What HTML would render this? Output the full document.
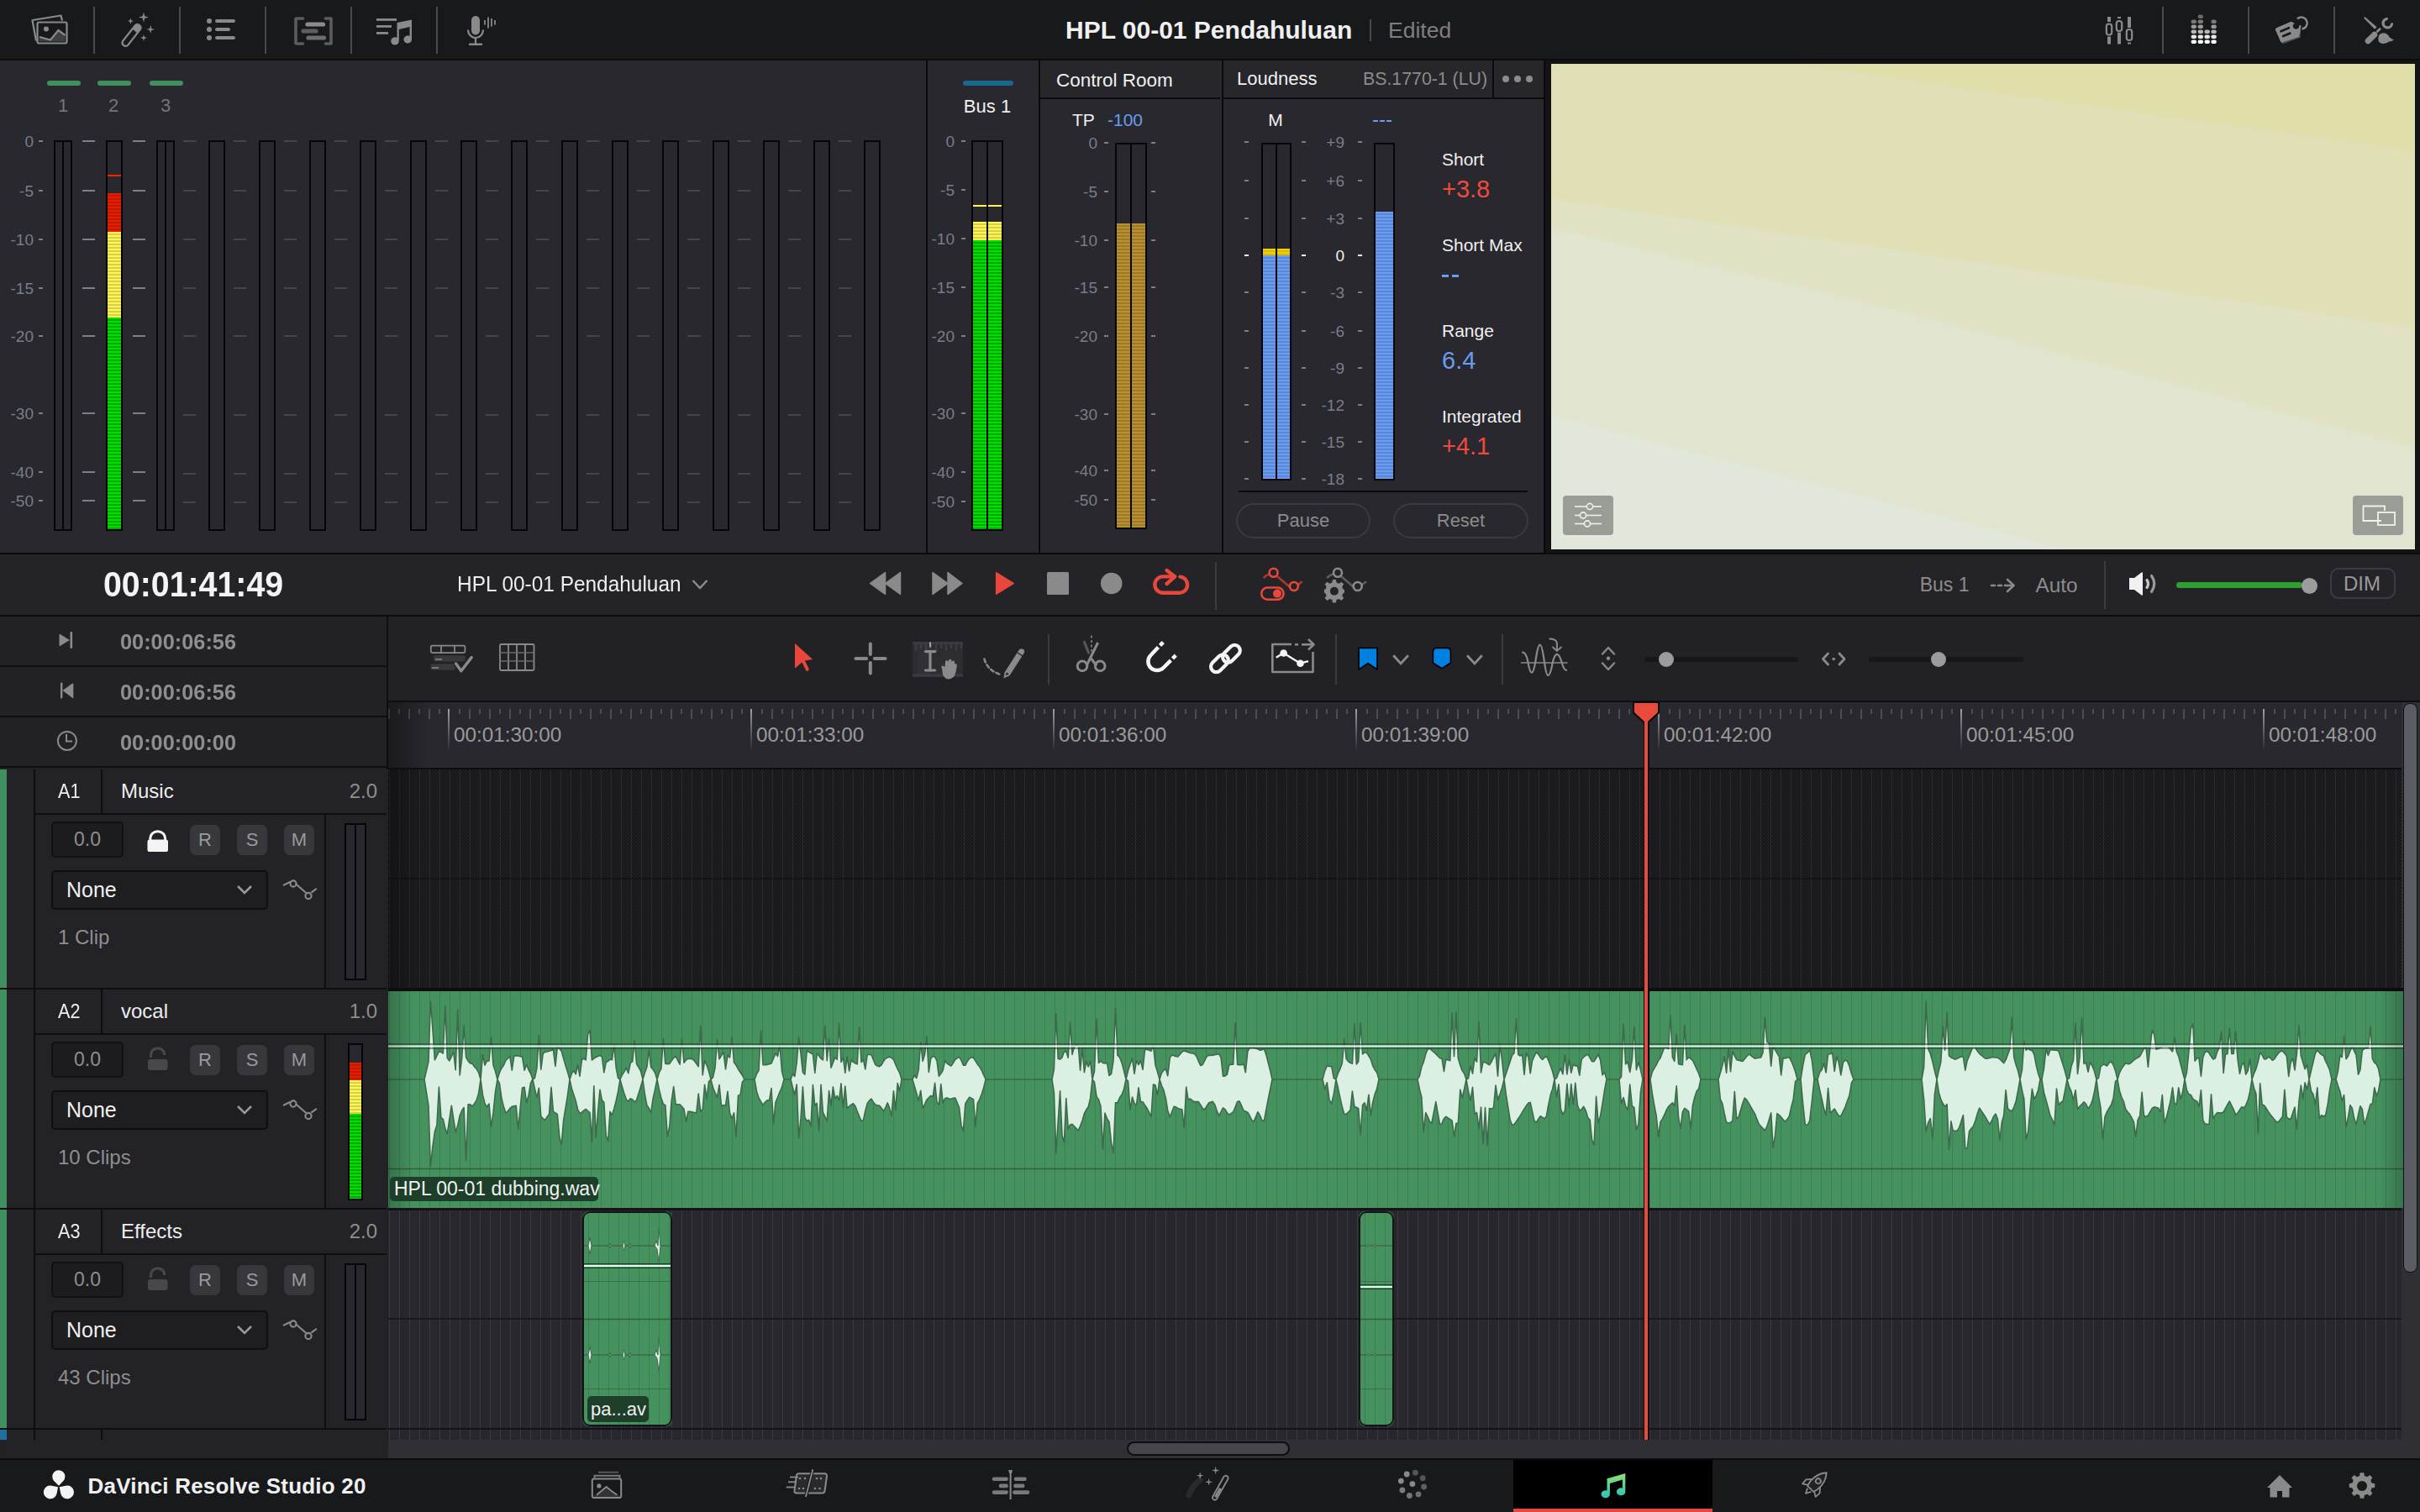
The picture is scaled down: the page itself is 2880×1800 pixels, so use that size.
<!DOCTYPE html><html><head><meta charset="utf-8"><style>
html,body{margin:0;padding:0;width:2880px;height:1800px;overflow:hidden;background:#222226;}
body{position:relative;font-family:"Liberation Sans",sans-serif;}
body>div{position:absolute;box-sizing:border-box;}
</style></head><body>
<div style="left:0px;top:0px;width:2880px;height:70px;background:#18191b"></div>
<div style="left:0px;top:70px;width:2880px;height:2px;background:#0b0b0c"></div>
<div style="left:111px;top:8px;width:2px;height:56px;background:#4a4a4d"></div>
<div style="left:213px;top:8px;width:2px;height:56px;background:#4a4a4d"></div>
<div style="left:315px;top:8px;width:2px;height:56px;background:#4a4a4d"></div>
<div style="left:417px;top:8px;width:2px;height:56px;background:#4a4a4d"></div>
<div style="left:519px;top:8px;width:2px;height:56px;background:#4a4a4d"></div>
<div style="left:2573px;top:8px;width:2px;height:56px;background:#4a4a4d"></div>
<div style="left:2675px;top:8px;width:2px;height:56px;background:#4a4a4d"></div>
<div style="left:2777px;top:8px;width:2px;height:56px;background:#4a4a4d"></div>
<div style="left:1268px;top:20.8px;font-size:30px;line-height:30px;color:#f0f0f0;font-weight:700;white-space:nowrap;">HPL 00-01 Pendahuluan</div>
<div style="left:1630px;top:23px;width:2px;height:26px;background:#4a4a4d"></div>
<div style="left:1652px;top:22.6px;font-size:26.5px;line-height:26.5px;color:#7e7e7e;font-weight:400;white-space:nowrap;">Edited</div>
<svg style="position:absolute;left:0px;top:0px;" width="600" height="70" viewBox="0 0 600 70">
<g fill="none" stroke="#8a8a8a" stroke-width="2.2" stroke-linejoin="round">
 <path d="M43 48.5 L38.5 24 L72.5 18.5 L74 24.5"/>
 <rect x="44.5" y="26.5" width="35" height="25" rx="2"/>
</g>
<path d="M46.5 44 L48.5 43.5 L60 47 L69.5 36 L77.5 41.5 L77.5 49.5 L46.5 49.5 Z" fill="#404042"/>
<path d="M47 44 L60 47.5 L69.5 36 L77.5 42" fill="none" stroke="#8a8a8a" stroke-width="2.2"/>
<circle cx="55" cy="34.6" r="3" fill="#8a8a8a"/>
<g>
 <path d="M146 49 L161 30 A4 4 0 0 1 167 35 L152 54 A4 4 0 0 1 146 49 Z" fill="none" stroke="#8a8a8a" stroke-width="2.2"/>
 <path d="M157.5 34.5 L161 30 A4 4 0 0 1 167 35 L163.5 39.5 Z" fill="#8a8a8a"/>
 <path d="M171 14.5 L172.3 19.2 L177 20.5 L172.3 21.8 L171 26.5 L169.7 21.8 L165 20.5 L169.7 19.2 Z" fill="#8a8a8a"/>
 <path d="M155.4 21.5 L156.3 24.2 L159 25.1 L156.3 26 L155.4 28.7 L154.5 26 L151.8 25.1 L154.5 24.2 Z" fill="#8a8a8a"/>
 <path d="M179.2 30 L180.3 33.9 L184.2 35 L180.3 36.1 L179.2 40 L178.1 36.1 L174.2 35 L178.1 33.9 Z" fill="#8a8a8a"/>
 <path d="M171 41 L171.9 44.1 L175 45 L171.9 45.9 L171 49 L170.1 45.9 L167 45 L170.1 44.1 Z" fill="#8a8a8a"/>
</g>
<g fill="#8a8a8a">
 <circle cx="249" cy="25" r="3"/><circle cx="249" cy="35" r="3"/><circle cx="249" cy="45" r="3"/>
</g>
<g stroke="#8a8a8a" stroke-width="4" stroke-linecap="round">
 <line x1="258" y1="25" x2="278" y2="25"/><line x1="258" y1="35" x2="272" y2="35"/><line x1="258" y1="45" x2="278" y2="45"/>
</g>
<g fill="none" stroke="#5c5c5e" stroke-width="3.6" stroke-linecap="round" stroke-linejoin="round">
 <path d="M360.5 22 L353 22 Q352 22 352 23 L352 51 Q352 52 353 52 L360.5 52"/>
 <path d="M387.5 22 L394 22 L394 52 L387.5 52"/>
</g>
<g stroke-linecap="round" stroke-width="5.2">
 <line x1="366" y1="29" x2="384.5" y2="29" stroke="#8c8c8c"/>
 <line x1="361" y1="37" x2="376" y2="37" stroke="#5e5e60"/>
 <line x1="367" y1="45" x2="385.5" y2="45" stroke="#6e6e70"/>
</g>
<g fill="#8a8a8a">
 <rect x="448" y="22" width="24" height="2.8"/><rect x="448" y="30" width="18" height="2.8"/><rect x="448" y="38" width="14" height="2.8"/>
 <path d="M472.5 27 L490 23.5 L490 47 A4.8 4.6 0 1 1 487.6 43 L487.6 32 L474.8 35 L474.8 49 A4.8 4.6 0 1 1 472.5 45 Z"/>
</g>
<g>
 <rect x="561" y="19" width="10" height="22.5" rx="5" fill="#8a8a8a"/>
 <path d="M557 35.5 A9 9.5 0 0 0 575 35.5" fill="none" stroke="#8a8a8a" stroke-width="2.2"/>
 <line x1="566" y1="45" x2="566" y2="52" stroke="#8a8a8a" stroke-width="2.2"/>
 <line x1="559" y1="52.8" x2="573" y2="52.8" stroke="#8a8a8a" stroke-width="2.4" stroke-linecap="round"/>
 <g stroke="#8a8a8a" stroke-width="1.8"><line x1="577" y1="24" x2="577" y2="29.5"/><line x1="581" y1="20.5" x2="581" y2="33.5"/><line x1="585" y1="22" x2="585" y2="31.5"/><line x1="589" y1="24" x2="589" y2="29.5"/></g>
</g>
</svg>
<svg style="position:absolute;left:2500px;top:0px;" width="380" height="70" viewBox="0 0 380 70">
<g fill="#8a8a8a">
 <rect x="8" y="20" width="4" height="6"/><rect x="8" y="43.5" width="4" height="9"/>
 <rect x="20" y="20" width="4" height="2"/><rect x="20" y="38.5" width="4" height="14"/>
 <rect x="32" y="20" width="4" height="13"/><rect x="32" y="50.5" width="4" height="2"/>
</g>
<g fill="none" stroke="#8a8a8a" stroke-width="2.2">
 <rect x="6.8" y="28.5" width="6.4" height="13" rx="3"/>
 <rect x="18.8" y="25" width="6.4" height="12" rx="3"/>
 <rect x="30.8" y="35" width="6.4" height="13" rx="3"/>
</g>
<rect x="107.60000000000018" y="23.6" width="6.4" height="4.4" rx="2" fill="#7a7a7a"/><rect x="107.60000000000018" y="29.6" width="6.4" height="4.4" rx="2" fill="#9a9a9a"/><rect x="107.60000000000018" y="35.599999999999994" width="6.4" height="4.4" rx="2" fill="#b8b8b8"/><rect x="107.60000000000018" y="41.599999999999994" width="6.4" height="4.4" rx="2" fill="#e8e8e8"/><rect x="107.60000000000018" y="47.599999999999994" width="6.4" height="4.4" rx="2" fill="#ffffff"/><rect x="115.60000000000018" y="17.6" width="6.4" height="4.4" rx="2" fill="#6a6a6a"/><rect x="115.60000000000018" y="23.6" width="6.4" height="4.4" rx="2" fill="#7a7a7a"/><rect x="115.60000000000018" y="29.6" width="6.4" height="4.4" rx="2" fill="#9a9a9a"/><rect x="115.60000000000018" y="35.599999999999994" width="6.4" height="4.4" rx="2" fill="#b8b8b8"/><rect x="115.60000000000018" y="41.599999999999994" width="6.4" height="4.4" rx="2" fill="#e8e8e8"/><rect x="115.60000000000018" y="47.599999999999994" width="6.4" height="4.4" rx="2" fill="#ffffff"/><rect x="123.49999999999982" y="35.599999999999994" width="6.4" height="4.4" rx="2" fill="#b8b8b8"/><rect x="123.49999999999982" y="41.599999999999994" width="6.4" height="4.4" rx="2" fill="#e8e8e8"/><rect x="123.49999999999982" y="47.599999999999994" width="6.4" height="4.4" rx="2" fill="#ffffff"/><rect x="131.39999999999992" y="23.6" width="6.4" height="4.4" rx="2" fill="#7a7a7a"/><rect x="131.39999999999992" y="29.6" width="6.4" height="4.4" rx="2" fill="#9a9a9a"/><rect x="131.39999999999992" y="35.599999999999994" width="6.4" height="4.4" rx="2" fill="#b8b8b8"/><rect x="131.39999999999992" y="41.599999999999994" width="6.4" height="4.4" rx="2" fill="#e8e8e8"/><rect x="131.39999999999992" y="47.599999999999994" width="6.4" height="4.4" rx="2" fill="#ffffff"/>
<path d="M207.9 35.5 Q207.5 34 209 33.3 L226.5 25.8 L231 27.8 A3.6 3.6 0 1 0 236 30.5 L238.5 29.7 L237 43.7 L216 50.7 Q214.8 51 214.3 50 Z" fill="#8a8a8a"/>
<path d="M216 52 L237 44 L236.5 41" fill="none" stroke="#5a5a5a" stroke-width="1.2"/>
<g stroke="#1a1a1d" stroke-width="2.8" stroke-linecap="round"><line x1="214.5" y1="37.2" x2="223.8" y2="33.2"/><line x1="217.2" y1="43" x2="225.3" y2="39.6"/></g>
<path d="M233.8 22.5 A7 7 0 1 1 239.5 34.5" fill="none" stroke="#8a8a8a" stroke-width="2.4"/>
<g fill="#8a8a8a">
 <path d="M313.3 21.8 Q313 20.3 314.8 20.2 L328.6 32.2 L326.2 34.8 Z"/>
 <line x1="329.2" y1="37.6" x2="332.2" y2="34.6" stroke="#8a8a8a" stroke-width="2.8" stroke-linecap="round"/>
 <line x1="318.2" y1="48.8" x2="325.8" y2="41.2" stroke="#8a8a8a" stroke-width="7" stroke-linecap="round"/>
 <path d="M341.8 20.8 A6.9 6.9 0 1 0 348.2 27.2 L345.2 27.6 A3.7 3.7 0 1 1 341.6 23.9 Z"/>
 <path d="M330.3 46.2 Q330.3 39.3 336.8 39.3 Q341.5 39.6 343.6 44.3 Q345.8 46.3 348.8 47.6 Q346.3 49.6 343.2 49.6 Q339.6 52.3 335.3 51.9 Q330.3 51.3 330.3 46.2 Z"/>
</g>
</svg>
<div style="left:0px;top:72px;width:2880px;height:586px;background:#28282e"></div>
<div style="left:0px;top:658px;width:2880px;height:2px;background:#0b0b0c"></div>
<div style="right:2840px;top:158.7px;font-size:19px;line-height:19px;color:#7a7d88;font-weight:400;white-space:nowrap;">0</div>
<div style="left:46px;top:167px;width:5px;height:2px;background:#7a7d88"></div>
<div style="right:2840px;top:217.7px;font-size:19px;line-height:19px;color:#7a7d88;font-weight:400;white-space:nowrap;">-5</div>
<div style="left:46px;top:226px;width:5px;height:2px;background:#7a7d88"></div>
<div style="right:2840px;top:275.7px;font-size:19px;line-height:19px;color:#7a7d88;font-weight:400;white-space:nowrap;">-10</div>
<div style="left:46px;top:284px;width:5px;height:2px;background:#7a7d88"></div>
<div style="right:2840px;top:333.7px;font-size:19px;line-height:19px;color:#7a7d88;font-weight:400;white-space:nowrap;">-15</div>
<div style="left:46px;top:342px;width:5px;height:2px;background:#7a7d88"></div>
<div style="right:2840px;top:390.7px;font-size:19px;line-height:19px;color:#7a7d88;font-weight:400;white-space:nowrap;">-20</div>
<div style="left:46px;top:399px;width:5px;height:2px;background:#7a7d88"></div>
<div style="right:2840px;top:482.7px;font-size:19px;line-height:19px;color:#7a7d88;font-weight:400;white-space:nowrap;">-30</div>
<div style="left:46px;top:491px;width:5px;height:2px;background:#7a7d88"></div>
<div style="right:2840px;top:552.7px;font-size:19px;line-height:19px;color:#7a7d88;font-weight:400;white-space:nowrap;">-40</div>
<div style="left:46px;top:561px;width:5px;height:2px;background:#7a7d88"></div>
<div style="right:2840px;top:586.7px;font-size:19px;line-height:19px;color:#7a7d88;font-weight:400;white-space:nowrap;">-50</div>
<div style="left:46px;top:595px;width:5px;height:2px;background:#7a7d88"></div>
<div style="left:64px;top:167px;width:22px;height:465px;border:2px solid #060608;background:#28282e"></div>
<div style="left:74px;top:167px;width:2px;height:465px;background:#060608"></div>
<div style="left:126px;top:167px;width:20px;height:465px;border:2px solid #060608;background:#28282e"></div>
<div style="left:128px;top:230px;width:16px;height:46px;background:repeating-linear-gradient(180deg,#e81c00 0px,#e81c00 2px,#be1a00 2px,#be1a00 4px)"></div>
<div style="left:128px;top:276px;width:16px;height:102px;background:repeating-linear-gradient(180deg,#fff654 0px,#fff654 2px,#d6cf4e 2px,#d6cf4e 4px)"></div>
<div style="left:128px;top:378px;width:16px;height:252px;background:repeating-linear-gradient(180deg,#00e000 0px,#00e000 2px,#00a800 2px,#00a800 4px)"></div>
<div style="left:128px;top:208px;width:16px;height:2px;background:#ff2000"></div>
<div style="left:186px;top:167px;width:22px;height:465px;border:2px solid #060608;background:#28282e"></div>
<div style="left:196px;top:167px;width:2px;height:465px;background:#060608"></div>
<div style="left:248px;top:167px;width:20px;height:465px;border:2px solid #060608;background:#28282e"></div>
<div style="left:308px;top:167px;width:20px;height:465px;border:2px solid #060608;background:#28282e"></div>
<div style="left:368px;top:167px;width:20px;height:465px;border:2px solid #060608;background:#28282e"></div>
<div style="left:428px;top:167px;width:20px;height:465px;border:2px solid #060608;background:#28282e"></div>
<div style="left:488px;top:167px;width:20px;height:465px;border:2px solid #060608;background:#28282e"></div>
<div style="left:548px;top:167px;width:20px;height:465px;border:2px solid #060608;background:#28282e"></div>
<div style="left:608px;top:167px;width:20px;height:465px;border:2px solid #060608;background:#28282e"></div>
<div style="left:668px;top:167px;width:20px;height:465px;border:2px solid #060608;background:#28282e"></div>
<div style="left:728px;top:167px;width:20px;height:465px;border:2px solid #060608;background:#28282e"></div>
<div style="left:788px;top:167px;width:20px;height:465px;border:2px solid #060608;background:#28282e"></div>
<div style="left:848px;top:167px;width:20px;height:465px;border:2px solid #060608;background:#28282e"></div>
<div style="left:908px;top:167px;width:20px;height:465px;border:2px solid #060608;background:#28282e"></div>
<div style="left:968px;top:167px;width:20px;height:465px;border:2px solid #060608;background:#28282e"></div>
<div style="left:1028px;top:167px;width:20px;height:465px;border:2px solid #060608;background:#28282e"></div>
<div style="left:98px;top:167px;width:15px;height:2px;background:#7d808c"></div>
<div style="left:98px;top:226px;width:15px;height:2px;background:#7d808c"></div>
<div style="left:98px;top:284px;width:15px;height:2px;background:#7d808c"></div>
<div style="left:98px;top:342px;width:15px;height:2px;background:#7d808c"></div>
<div style="left:98px;top:399px;width:15px;height:2px;background:#7d808c"></div>
<div style="left:98px;top:491px;width:15px;height:2px;background:#7d808c"></div>
<div style="left:98px;top:561px;width:15px;height:2px;background:#7d808c"></div>
<div style="left:98px;top:595px;width:15px;height:2px;background:#7d808c"></div>
<div style="left:158px;top:167px;width:15px;height:2px;background:#7d808c"></div>
<div style="left:158px;top:226px;width:15px;height:2px;background:#7d808c"></div>
<div style="left:158px;top:284px;width:15px;height:2px;background:#7d808c"></div>
<div style="left:158px;top:342px;width:15px;height:2px;background:#7d808c"></div>
<div style="left:158px;top:399px;width:15px;height:2px;background:#7d808c"></div>
<div style="left:158px;top:491px;width:15px;height:2px;background:#7d808c"></div>
<div style="left:158px;top:561px;width:15px;height:2px;background:#7d808c"></div>
<div style="left:158px;top:595px;width:15px;height:2px;background:#7d808c"></div>
<div style="left:218px;top:167px;width:15px;height:2px;background:#45464d"></div>
<div style="left:218px;top:226px;width:15px;height:2px;background:#45464d"></div>
<div style="left:218px;top:284px;width:15px;height:2px;background:#45464d"></div>
<div style="left:218px;top:342px;width:15px;height:2px;background:#45464d"></div>
<div style="left:218px;top:399px;width:15px;height:2px;background:#45464d"></div>
<div style="left:218px;top:493px;width:15px;height:2px;background:#45464d"></div>
<div style="left:218px;top:563px;width:15px;height:2px;background:#45464d"></div>
<div style="left:218px;top:597px;width:15px;height:2px;background:#45464d"></div>
<div style="left:278px;top:167px;width:15px;height:2px;background:#45464d"></div>
<div style="left:278px;top:226px;width:15px;height:2px;background:#45464d"></div>
<div style="left:278px;top:284px;width:15px;height:2px;background:#45464d"></div>
<div style="left:278px;top:342px;width:15px;height:2px;background:#45464d"></div>
<div style="left:278px;top:399px;width:15px;height:2px;background:#45464d"></div>
<div style="left:278px;top:493px;width:15px;height:2px;background:#45464d"></div>
<div style="left:278px;top:563px;width:15px;height:2px;background:#45464d"></div>
<div style="left:278px;top:597px;width:15px;height:2px;background:#45464d"></div>
<div style="left:338px;top:167px;width:15px;height:2px;background:#45464d"></div>
<div style="left:338px;top:226px;width:15px;height:2px;background:#45464d"></div>
<div style="left:338px;top:284px;width:15px;height:2px;background:#45464d"></div>
<div style="left:338px;top:342px;width:15px;height:2px;background:#45464d"></div>
<div style="left:338px;top:399px;width:15px;height:2px;background:#45464d"></div>
<div style="left:338px;top:493px;width:15px;height:2px;background:#45464d"></div>
<div style="left:338px;top:563px;width:15px;height:2px;background:#45464d"></div>
<div style="left:338px;top:597px;width:15px;height:2px;background:#45464d"></div>
<div style="left:398px;top:167px;width:15px;height:2px;background:#45464d"></div>
<div style="left:398px;top:226px;width:15px;height:2px;background:#45464d"></div>
<div style="left:398px;top:284px;width:15px;height:2px;background:#45464d"></div>
<div style="left:398px;top:342px;width:15px;height:2px;background:#45464d"></div>
<div style="left:398px;top:399px;width:15px;height:2px;background:#45464d"></div>
<div style="left:398px;top:493px;width:15px;height:2px;background:#45464d"></div>
<div style="left:398px;top:563px;width:15px;height:2px;background:#45464d"></div>
<div style="left:398px;top:597px;width:15px;height:2px;background:#45464d"></div>
<div style="left:458px;top:167px;width:15px;height:2px;background:#45464d"></div>
<div style="left:458px;top:226px;width:15px;height:2px;background:#45464d"></div>
<div style="left:458px;top:284px;width:15px;height:2px;background:#45464d"></div>
<div style="left:458px;top:342px;width:15px;height:2px;background:#45464d"></div>
<div style="left:458px;top:399px;width:15px;height:2px;background:#45464d"></div>
<div style="left:458px;top:493px;width:15px;height:2px;background:#45464d"></div>
<div style="left:458px;top:563px;width:15px;height:2px;background:#45464d"></div>
<div style="left:458px;top:597px;width:15px;height:2px;background:#45464d"></div>
<div style="left:518px;top:167px;width:15px;height:2px;background:#45464d"></div>
<div style="left:518px;top:226px;width:15px;height:2px;background:#45464d"></div>
<div style="left:518px;top:284px;width:15px;height:2px;background:#45464d"></div>
<div style="left:518px;top:342px;width:15px;height:2px;background:#45464d"></div>
<div style="left:518px;top:399px;width:15px;height:2px;background:#45464d"></div>
<div style="left:518px;top:493px;width:15px;height:2px;background:#45464d"></div>
<div style="left:518px;top:563px;width:15px;height:2px;background:#45464d"></div>
<div style="left:518px;top:597px;width:15px;height:2px;background:#45464d"></div>
<div style="left:578px;top:167px;width:15px;height:2px;background:#45464d"></div>
<div style="left:578px;top:226px;width:15px;height:2px;background:#45464d"></div>
<div style="left:578px;top:284px;width:15px;height:2px;background:#45464d"></div>
<div style="left:578px;top:342px;width:15px;height:2px;background:#45464d"></div>
<div style="left:578px;top:399px;width:15px;height:2px;background:#45464d"></div>
<div style="left:578px;top:493px;width:15px;height:2px;background:#45464d"></div>
<div style="left:578px;top:563px;width:15px;height:2px;background:#45464d"></div>
<div style="left:578px;top:597px;width:15px;height:2px;background:#45464d"></div>
<div style="left:638px;top:167px;width:15px;height:2px;background:#45464d"></div>
<div style="left:638px;top:226px;width:15px;height:2px;background:#45464d"></div>
<div style="left:638px;top:284px;width:15px;height:2px;background:#45464d"></div>
<div style="left:638px;top:342px;width:15px;height:2px;background:#45464d"></div>
<div style="left:638px;top:399px;width:15px;height:2px;background:#45464d"></div>
<div style="left:638px;top:493px;width:15px;height:2px;background:#45464d"></div>
<div style="left:638px;top:563px;width:15px;height:2px;background:#45464d"></div>
<div style="left:638px;top:597px;width:15px;height:2px;background:#45464d"></div>
<div style="left:698px;top:167px;width:15px;height:2px;background:#45464d"></div>
<div style="left:698px;top:226px;width:15px;height:2px;background:#45464d"></div>
<div style="left:698px;top:284px;width:15px;height:2px;background:#45464d"></div>
<div style="left:698px;top:342px;width:15px;height:2px;background:#45464d"></div>
<div style="left:698px;top:399px;width:15px;height:2px;background:#45464d"></div>
<div style="left:698px;top:493px;width:15px;height:2px;background:#45464d"></div>
<div style="left:698px;top:563px;width:15px;height:2px;background:#45464d"></div>
<div style="left:698px;top:597px;width:15px;height:2px;background:#45464d"></div>
<div style="left:758px;top:167px;width:15px;height:2px;background:#45464d"></div>
<div style="left:758px;top:226px;width:15px;height:2px;background:#45464d"></div>
<div style="left:758px;top:284px;width:15px;height:2px;background:#45464d"></div>
<div style="left:758px;top:342px;width:15px;height:2px;background:#45464d"></div>
<div style="left:758px;top:399px;width:15px;height:2px;background:#45464d"></div>
<div style="left:758px;top:493px;width:15px;height:2px;background:#45464d"></div>
<div style="left:758px;top:563px;width:15px;height:2px;background:#45464d"></div>
<div style="left:758px;top:597px;width:15px;height:2px;background:#45464d"></div>
<div style="left:818px;top:167px;width:15px;height:2px;background:#45464d"></div>
<div style="left:818px;top:226px;width:15px;height:2px;background:#45464d"></div>
<div style="left:818px;top:284px;width:15px;height:2px;background:#45464d"></div>
<div style="left:818px;top:342px;width:15px;height:2px;background:#45464d"></div>
<div style="left:818px;top:399px;width:15px;height:2px;background:#45464d"></div>
<div style="left:818px;top:493px;width:15px;height:2px;background:#45464d"></div>
<div style="left:818px;top:563px;width:15px;height:2px;background:#45464d"></div>
<div style="left:818px;top:597px;width:15px;height:2px;background:#45464d"></div>
<div style="left:878px;top:167px;width:15px;height:2px;background:#45464d"></div>
<div style="left:878px;top:226px;width:15px;height:2px;background:#45464d"></div>
<div style="left:878px;top:284px;width:15px;height:2px;background:#45464d"></div>
<div style="left:878px;top:342px;width:15px;height:2px;background:#45464d"></div>
<div style="left:878px;top:399px;width:15px;height:2px;background:#45464d"></div>
<div style="left:878px;top:493px;width:15px;height:2px;background:#45464d"></div>
<div style="left:878px;top:563px;width:15px;height:2px;background:#45464d"></div>
<div style="left:878px;top:597px;width:15px;height:2px;background:#45464d"></div>
<div style="left:938px;top:167px;width:15px;height:2px;background:#45464d"></div>
<div style="left:938px;top:226px;width:15px;height:2px;background:#45464d"></div>
<div style="left:938px;top:284px;width:15px;height:2px;background:#45464d"></div>
<div style="left:938px;top:342px;width:15px;height:2px;background:#45464d"></div>
<div style="left:938px;top:399px;width:15px;height:2px;background:#45464d"></div>
<div style="left:938px;top:493px;width:15px;height:2px;background:#45464d"></div>
<div style="left:938px;top:563px;width:15px;height:2px;background:#45464d"></div>
<div style="left:938px;top:597px;width:15px;height:2px;background:#45464d"></div>
<div style="left:998px;top:167px;width:15px;height:2px;background:#45464d"></div>
<div style="left:998px;top:226px;width:15px;height:2px;background:#45464d"></div>
<div style="left:998px;top:284px;width:15px;height:2px;background:#45464d"></div>
<div style="left:998px;top:342px;width:15px;height:2px;background:#45464d"></div>
<div style="left:998px;top:399px;width:15px;height:2px;background:#45464d"></div>
<div style="left:998px;top:493px;width:15px;height:2px;background:#45464d"></div>
<div style="left:998px;top:563px;width:15px;height:2px;background:#45464d"></div>
<div style="left:998px;top:597px;width:15px;height:2px;background:#45464d"></div>
<div style="left:56px;top:96px;width:40px;height:6px;border-radius:3px;background:#3f8f5f"></div>
<div style="left:-425px;width:1000px;text-align:center;top:115.3px;font-size:22px;line-height:22px;color:#72757b;font-weight:400;white-space:nowrap;">1</div>
<div style="left:116px;top:96px;width:40px;height:6px;border-radius:3px;background:#3f8f5f"></div>
<div style="left:-365px;width:1000px;text-align:center;top:115.3px;font-size:22px;line-height:22px;color:#72757b;font-weight:400;white-space:nowrap;">2</div>
<div style="left:178px;top:96px;width:40px;height:6px;border-radius:3px;background:#3f8f5f"></div>
<div style="left:-303px;width:1000px;text-align:center;top:115.3px;font-size:22px;line-height:22px;color:#72757b;font-weight:400;white-space:nowrap;">3</div>
<div style="left:1102px;top:72px;width:2px;height:586px;background:#0b0b0c"></div>
<div style="left:1236px;top:72px;width:2px;height:586px;background:#0b0b0c"></div>
<div style="left:1454px;top:72px;width:2px;height:586px;background:#0b0b0c"></div>
<div style="left:1837px;top:72px;width:2px;height:586px;background:#0b0b0c"></div>
<div style="left:1146px;top:96px;width:60px;height:6px;border-radius:3px;background:#1a6a8c"></div>
<div style="left:675px;width:1000px;text-align:center;top:115.8px;font-size:22px;line-height:22px;color:#f0f0f0;font-weight:400;white-space:nowrap;">Bus 1</div>
<div style="right:1744px;top:158.7px;font-size:19px;line-height:19px;color:#7a7d88;font-weight:400;white-space:nowrap;">0</div>
<div style="left:1144px;top:167px;width:5px;height:2px;background:#7a7d88"></div>
<div style="right:1744px;top:216.7px;font-size:19px;line-height:19px;color:#7a7d88;font-weight:400;white-space:nowrap;">-5</div>
<div style="left:1144px;top:225px;width:5px;height:2px;background:#7a7d88"></div>
<div style="right:1744px;top:274.7px;font-size:19px;line-height:19px;color:#7a7d88;font-weight:400;white-space:nowrap;">-10</div>
<div style="left:1144px;top:283px;width:5px;height:2px;background:#7a7d88"></div>
<div style="right:1744px;top:332.7px;font-size:19px;line-height:19px;color:#7a7d88;font-weight:400;white-space:nowrap;">-15</div>
<div style="left:1144px;top:341px;width:5px;height:2px;background:#7a7d88"></div>
<div style="right:1744px;top:390.7px;font-size:19px;line-height:19px;color:#7a7d88;font-weight:400;white-space:nowrap;">-20</div>
<div style="left:1144px;top:399px;width:5px;height:2px;background:#7a7d88"></div>
<div style="right:1744px;top:482.7px;font-size:19px;line-height:19px;color:#7a7d88;font-weight:400;white-space:nowrap;">-30</div>
<div style="left:1144px;top:491px;width:5px;height:2px;background:#7a7d88"></div>
<div style="right:1744px;top:552.7px;font-size:19px;line-height:19px;color:#7a7d88;font-weight:400;white-space:nowrap;">-40</div>
<div style="left:1144px;top:561px;width:5px;height:2px;background:#7a7d88"></div>
<div style="right:1744px;top:587.7px;font-size:19px;line-height:19px;color:#7a7d88;font-weight:400;white-space:nowrap;">-50</div>
<div style="left:1144px;top:596px;width:5px;height:2px;background:#7a7d88"></div>
<div style="left:1156px;top:167px;width:38px;height:465px;border:2px solid #060608;background:#28282e"></div>
<div style="left:1174px;top:167px;width:2px;height:465px;background:#060608"></div>
<div style="left:1158px;top:264px;width:16px;height:22px;background:repeating-linear-gradient(180deg,#fff654 0px,#fff654 2px,#d6cf4e 2px,#d6cf4e 4px)"></div>
<div style="left:1176px;top:264px;width:16px;height:22px;background:repeating-linear-gradient(180deg,#fff654 0px,#fff654 2px,#d6cf4e 2px,#d6cf4e 4px)"></div>
<div style="left:1158px;top:286px;width:16px;height:344px;background:repeating-linear-gradient(180deg,#00e000 0px,#00e000 2px,#00a800 2px,#00a800 4px)"></div>
<div style="left:1176px;top:286px;width:16px;height:344px;background:repeating-linear-gradient(180deg,#00e000 0px,#00e000 2px,#00a800 2px,#00a800 4px)"></div>
<div style="left:1158px;top:244px;width:16px;height:2px;background:#fff654"></div>
<div style="left:1176px;top:244px;width:16px;height:2px;background:#fff654"></div>
<div style="left:1238px;top:72px;width:214px;height:45px;background:#26262b"></div>
<div style="left:1238px;top:116px;width:214px;height:2px;background:#0b0b0c"></div>
<div style="left:1257px;top:85.0px;font-size:22.5px;line-height:22.5px;color:#f0f0f0;font-weight:400;white-space:nowrap;">Control Room</div>
<div style="left:1276px;top:132.2px;font-size:21px;line-height:21px;color:#f0f0f0;font-weight:400;white-space:nowrap;">TP</div>
<div style="left:1318px;top:132.2px;font-size:21px;line-height:21px;color:#6a9cf0;font-weight:400;white-space:nowrap;">-100</div>
<div style="right:1574px;top:160.7px;font-size:19px;line-height:19px;color:#7a7d88;font-weight:400;white-space:nowrap;">0</div>
<div style="left:1314px;top:169px;width:5px;height:2px;background:#7a7d88"></div>
<div style="left:1370px;top:169px;width:5px;height:2px;background:#7a7d88"></div>
<div style="right:1574px;top:218.7px;font-size:19px;line-height:19px;color:#7a7d88;font-weight:400;white-space:nowrap;">-5</div>
<div style="left:1314px;top:227px;width:5px;height:2px;background:#7a7d88"></div>
<div style="left:1370px;top:227px;width:5px;height:2px;background:#7a7d88"></div>
<div style="right:1574px;top:276.7px;font-size:19px;line-height:19px;color:#7a7d88;font-weight:400;white-space:nowrap;">-10</div>
<div style="left:1314px;top:285px;width:5px;height:2px;background:#7a7d88"></div>
<div style="left:1370px;top:285px;width:5px;height:2px;background:#7a7d88"></div>
<div style="right:1574px;top:332.7px;font-size:19px;line-height:19px;color:#7a7d88;font-weight:400;white-space:nowrap;">-15</div>
<div style="left:1314px;top:341px;width:5px;height:2px;background:#7a7d88"></div>
<div style="left:1370px;top:341px;width:5px;height:2px;background:#7a7d88"></div>
<div style="right:1574px;top:390.7px;font-size:19px;line-height:19px;color:#7a7d88;font-weight:400;white-space:nowrap;">-20</div>
<div style="left:1314px;top:399px;width:5px;height:2px;background:#7a7d88"></div>
<div style="left:1370px;top:399px;width:5px;height:2px;background:#7a7d88"></div>
<div style="right:1574px;top:483.7px;font-size:19px;line-height:19px;color:#7a7d88;font-weight:400;white-space:nowrap;">-30</div>
<div style="left:1314px;top:492px;width:5px;height:2px;background:#7a7d88"></div>
<div style="left:1370px;top:492px;width:5px;height:2px;background:#7a7d88"></div>
<div style="right:1574px;top:550.7px;font-size:19px;line-height:19px;color:#7a7d88;font-weight:400;white-space:nowrap;">-40</div>
<div style="left:1314px;top:559px;width:5px;height:2px;background:#7a7d88"></div>
<div style="left:1370px;top:559px;width:5px;height:2px;background:#7a7d88"></div>
<div style="right:1574px;top:585.7px;font-size:19px;line-height:19px;color:#7a7d88;font-weight:400;white-space:nowrap;">-50</div>
<div style="left:1314px;top:594px;width:5px;height:2px;background:#7a7d88"></div>
<div style="left:1370px;top:594px;width:5px;height:2px;background:#7a7d88"></div>
<div style="left:1327px;top:170px;width:38px;height:460px;border:2px solid #060608;background:#28282e"></div>
<div style="left:1345px;top:170px;width:2px;height:460px;background:#060608"></div>
<div style="left:1329px;top:266px;width:16px;height:362px;background:repeating-linear-gradient(180deg,#b89030 0px,#b89030 2px,#9c7a28 2px,#9c7a28 4px)"></div>
<div style="left:1347px;top:266px;width:16px;height:362px;background:repeating-linear-gradient(180deg,#b89030 0px,#b89030 2px,#9c7a28 2px,#9c7a28 4px)"></div>
<div style="left:1456px;top:72px;width:381px;height:45px;background:#26262b"></div>
<div style="left:1456px;top:116px;width:381px;height:2px;background:#0b0b0c"></div>
<div style="left:1776px;top:72px;width:2px;height:45px;background:#0b0b0c"></div>
<div style="left:1472px;top:83.3px;font-size:22px;line-height:22px;color:#f0f0f0;font-weight:400;white-space:nowrap;">Loudness</div>
<div style="right:1110px;top:83.6px;font-size:21.3px;line-height:21.3px;color:#8c8c8c;font-weight:400;white-space:nowrap;">BS.1770-1 (LU)</div>
<div style="left:1788px;top:90px;width:8px;height:8px;border-radius:50%;background:#8c8c8c"></div>
<div style="left:1802px;top:90px;width:8px;height:8px;border-radius:50%;background:#8c8c8c"></div>
<div style="left:1816px;top:90px;width:8px;height:8px;border-radius:50%;background:#8c8c8c"></div>
<div style="left:1018px;width:1000px;text-align:center;top:132.2px;font-size:21px;line-height:21px;color:#f0f0f0;font-weight:400;white-space:nowrap;">M</div>
<div style="left:1634px;top:143px;width:6px;height:2px;background:#6a9cf0"></div>
<div style="left:1642px;top:143px;width:6px;height:2px;background:#6a9cf0"></div>
<div style="left:1650px;top:143px;width:6px;height:2px;background:#6a9cf0"></div>
<div style="right:1280px;top:159.7px;font-size:19px;line-height:19px;color:#7a7d88;font-weight:400;white-space:nowrap;">+9</div>
<div style="left:1481px;top:168px;width:5px;height:2px;background:#7a7d88"></div>
<div style="left:1549px;top:168px;width:5px;height:2px;background:#7a7d88"></div>
<div style="left:1616px;top:168px;width:5px;height:2px;background:#7a7d88"></div>
<div style="right:1280px;top:205.7px;font-size:19px;line-height:19px;color:#7a7d88;font-weight:400;white-space:nowrap;">+6</div>
<div style="left:1481px;top:214px;width:5px;height:2px;background:#7a7d88"></div>
<div style="left:1549px;top:214px;width:5px;height:2px;background:#7a7d88"></div>
<div style="left:1616px;top:214px;width:5px;height:2px;background:#7a7d88"></div>
<div style="right:1280px;top:250.7px;font-size:19px;line-height:19px;color:#7a7d88;font-weight:400;white-space:nowrap;">+3</div>
<div style="left:1481px;top:259px;width:5px;height:2px;background:#7a7d88"></div>
<div style="left:1549px;top:259px;width:5px;height:2px;background:#7a7d88"></div>
<div style="left:1616px;top:259px;width:5px;height:2px;background:#7a7d88"></div>
<div style="right:1280px;top:294.7px;font-size:19px;line-height:19px;color:#f0f0f0;font-weight:400;white-space:nowrap;">0</div>
<div style="left:1481px;top:303px;width:5px;height:2px;background:#f0f0f0"></div>
<div style="left:1549px;top:303px;width:5px;height:2px;background:#f0f0f0"></div>
<div style="left:1616px;top:303px;width:5px;height:2px;background:#f0f0f0"></div>
<div style="right:1280px;top:338.7px;font-size:19px;line-height:19px;color:#7a7d88;font-weight:400;white-space:nowrap;">-3</div>
<div style="left:1481px;top:347px;width:5px;height:2px;background:#7a7d88"></div>
<div style="left:1549px;top:347px;width:5px;height:2px;background:#7a7d88"></div>
<div style="left:1616px;top:347px;width:5px;height:2px;background:#7a7d88"></div>
<div style="right:1280px;top:384.7px;font-size:19px;line-height:19px;color:#7a7d88;font-weight:400;white-space:nowrap;">-6</div>
<div style="left:1481px;top:393px;width:5px;height:2px;background:#7a7d88"></div>
<div style="left:1549px;top:393px;width:5px;height:2px;background:#7a7d88"></div>
<div style="left:1616px;top:393px;width:5px;height:2px;background:#7a7d88"></div>
<div style="right:1280px;top:428.7px;font-size:19px;line-height:19px;color:#7a7d88;font-weight:400;white-space:nowrap;">-9</div>
<div style="left:1481px;top:437px;width:5px;height:2px;background:#7a7d88"></div>
<div style="left:1549px;top:437px;width:5px;height:2px;background:#7a7d88"></div>
<div style="left:1616px;top:437px;width:5px;height:2px;background:#7a7d88"></div>
<div style="right:1280px;top:472.7px;font-size:19px;line-height:19px;color:#7a7d88;font-weight:400;white-space:nowrap;">-12</div>
<div style="left:1481px;top:481px;width:5px;height:2px;background:#7a7d88"></div>
<div style="left:1549px;top:481px;width:5px;height:2px;background:#7a7d88"></div>
<div style="left:1616px;top:481px;width:5px;height:2px;background:#7a7d88"></div>
<div style="right:1280px;top:516.7px;font-size:19px;line-height:19px;color:#7a7d88;font-weight:400;white-space:nowrap;">-15</div>
<div style="left:1481px;top:525px;width:5px;height:2px;background:#7a7d88"></div>
<div style="left:1549px;top:525px;width:5px;height:2px;background:#7a7d88"></div>
<div style="left:1616px;top:525px;width:5px;height:2px;background:#7a7d88"></div>
<div style="right:1280px;top:560.7px;font-size:19px;line-height:19px;color:#7a7d88;font-weight:400;white-space:nowrap;">-18</div>
<div style="left:1481px;top:569px;width:5px;height:2px;background:#7a7d88"></div>
<div style="left:1549px;top:569px;width:5px;height:2px;background:#7a7d88"></div>
<div style="left:1616px;top:569px;width:5px;height:2px;background:#7a7d88"></div>
<div style="left:1501px;top:170px;width:36px;height:402px;border:2px solid #060608;background:#28282e"></div>
<div style="left:1518px;top:170px;width:2px;height:402px;background:#060608"></div>
<div style="left:1503px;top:296px;width:15px;height:8px;background:repeating-linear-gradient(180deg,#f0d000 0px,#f0d000 2px,#d8bc00 2px,#d8bc00 4px)"></div>
<div style="left:1520px;top:296px;width:15px;height:8px;background:repeating-linear-gradient(180deg,#f0d000 0px,#f0d000 2px,#d8bc00 2px,#d8bc00 4px)"></div>
<div style="left:1503px;top:304px;width:15px;height:266px;background:repeating-linear-gradient(180deg,#6a9cf0 0px,#6a9cf0 2px,#5a86d8 2px,#5a86d8 4px)"></div>
<div style="left:1520px;top:304px;width:15px;height:266px;background:repeating-linear-gradient(180deg,#6a9cf0 0px,#6a9cf0 2px,#5a86d8 2px,#5a86d8 4px)"></div>
<div style="left:1635px;top:170px;width:25px;height:402px;border:2px solid #060608;background:#28282e"></div>
<div style="left:1637px;top:252px;width:21px;height:318px;background:repeating-linear-gradient(180deg,#6a9cf0 0px,#6a9cf0 2px,#5a86d8 2px,#5a86d8 4px)"></div>
<div style="left:1716px;top:178.7px;font-size:21px;line-height:21px;color:#f0f0f0;font-weight:400;white-space:nowrap;">Short</div>
<div style="left:1716px;top:211.3px;font-size:29px;line-height:29px;color:#f04a3c;font-weight:400;white-space:nowrap;">+3.8</div>
<div style="left:1716px;top:280.7px;font-size:21px;line-height:21px;color:#f0f0f0;font-weight:400;white-space:nowrap;">Short Max</div>
<div style="left:1716px;top:327px;width:8px;height:3px;background:#6a9cf0"></div>
<div style="left:1728px;top:327px;width:8px;height:3px;background:#6a9cf0"></div>
<div style="left:1716px;top:382.7px;font-size:21px;line-height:21px;color:#f0f0f0;font-weight:400;white-space:nowrap;">Range</div>
<div style="left:1716px;top:414.8px;font-size:29px;line-height:29px;color:#6a9cf0;font-weight:400;white-space:nowrap;">6.4</div>
<div style="left:1716px;top:484.7px;font-size:21px;line-height:21px;color:#f0f0f0;font-weight:400;white-space:nowrap;">Integrated</div>
<div style="left:1716px;top:516.8px;font-size:29px;line-height:29px;color:#f04a3c;font-weight:400;white-space:nowrap;">+4.1</div>
<div style="left:1474px;top:584px;width:344px;height:2px;background:#0b0b0c"></div>
<div style="left:1471px;top:599px;width:160px;height:42px;border:2px solid #3a3a40;border-radius:21px"></div>
<div style="left:1051px;width:1000px;text-align:center;top:609.3px;font-size:22px;line-height:22px;color:#8c8c8c;font-weight:400;white-space:nowrap;">Pause</div>
<div style="left:1658px;top:599px;width:161px;height:42px;border:2px solid #3a3a40;border-radius:21px"></div>
<div style="left:1238.5px;width:1000px;text-align:center;top:609.3px;font-size:22px;line-height:22px;color:#8c8c8c;font-weight:400;white-space:nowrap;">Reset</div>
<div style="left:1839px;top:72px;width:1041px;height:586px;background:#141416"></div>
<svg style="position:absolute;left:1846px;top:76px;" width="1028" height="578" viewBox="0 0 1028 578"><defs><filter id="vb" x="-5%" y="-5%" width="110%" height="110%"><feGaussianBlur stdDeviation="1.5"/></filter></defs>
<rect x="0" y="0" width="1028" height="578" fill="#e2e7dc"/>
<g filter="url(#vb)">
<polygon points="-10,-10 1040,-10 1040,590 658,590 -10,417" fill="#e1e5d0"/>
<polygon points="-10,-10 1040,-10 1040,461 425,297 -10,193" fill="#e0e2c3"/>
<polygon points="-10,-10 1040,-10 1040,316 -10,159" fill="#e0dfb5"/>
<polygon points="293,-10 1040,-10 1040,105 293,0" fill="#e0dea9"/>
</g></svg>
<div style="left:1860px;top:590px;width:60px;height:47px;border-radius:4px;background:#9a9c96"></div>
<div style="left:2800px;top:590px;width:60px;height:47px;border-radius:4px;background:#9a9c96"></div>
<svg style="position:absolute;left:1860px;top:590px;" width="60" height="47" viewBox="0 0 60 47"><g stroke="#f0f0f0" stroke-width="1.6" fill="none"><line x1="14" y1="13" x2="46" y2="13"/><line x1="14" y1="23.5" x2="46" y2="23.5"/><line x1="14" y1="33.5" x2="46" y2="33.5"/></g><g fill="#9a9c96" stroke="#f0f0f0" stroke-width="1.6"><circle cx="32" cy="13" r="3.6"/><circle cx="24" cy="23.5" r="3.6"/><circle cx="29" cy="33.5" r="3.6"/></g></svg>
<svg style="position:absolute;left:2800px;top:590px;" width="60" height="47" viewBox="0 0 60 47"><g stroke="#f0f0f0" stroke-width="1.8" fill="none"><path d="M34 30 L12.5 30 L12.5 12.5 L38 12.5 L38 18"/><rect x="30" y="20" width="20" height="15"/></g></svg>
<div style="left:0px;top:660px;width:2880px;height:72px;background:#232328"></div>
<div style="left:0px;top:732px;width:2880px;height:2px;background:#0b0b0c"></div>
<div style="left:0px;top:734px;width:2880px;height:1004px;background:#222226"></div>
<div style="left:123px;top:675.3px;font-size:41.6px;line-height:41.6px;color:#f4f4f4;font-weight:700;white-space:nowrap;transform:scaleX(0.945);transform-origin:0 50%;">00:01:41:49</div>
<div style="left:543.6px;top:682.8px;font-size:25px;line-height:25px;color:#eeeeee;font-weight:400;white-space:nowrap;transform:scaleX(0.977);transform-origin:0 50%;">HPL 00-01 Pendahuluan</div>
<svg style="position:absolute;left:822px;top:688px;" width="22" height="16" viewBox="0 0 22 16"><path d="M2.5 3 L11 12 L19.5 3" stroke="#8c8c8c" stroke-width="2.5" fill="none"/></svg>
<div style="left:1446px;top:669px;width:2px;height:57px;background:#3c3c40"></div>
<div style="right:536.5px;top:685.4px;font-size:23px;line-height:23px;color:#8c8c8c;font-weight:400;white-space:nowrap;">Bus 1</div>
<div style="left:2422.5px;top:684.7px;font-size:24.3px;line-height:24.3px;color:#8c8c8c;font-weight:400;white-space:nowrap;">Auto</div>
<div style="left:2504px;top:668px;width:2px;height:57px;background:#3c3c40"></div>
<div style="left:2590px;top:693px;width:150px;height:7px;border-radius:4px;background:#2fa02f"></div>
<div style="left:2739px;top:688px;width:19px;height:19px;border-radius:50%;background:#9c9c9c"></div>
<div style="left:2773px;top:676px;width:78px;height:37px;border:2px solid #3c3c42;border-radius:10px"></div>
<div style="left:2311px;width:1000px;text-align:center;top:683.3px;font-size:24px;line-height:24px;color:#9a9a9a;font-weight:400;white-space:nowrap;">DIM</div>
<svg style="position:absolute;left:1000px;top:660px;" width="700" height="72" viewBox="0 0 700 72">
<g fill="#8a8a8a" stroke="#8a8a8a" stroke-width="1.5" stroke-linejoin="round">
 <path d="M35.5 34.5 L53.5 21.5 L53.5 47.5 Z"/><path d="M53.5 34.5 L71.5 21.5 L71.5 47.5 Z"/>
 <path d="M110 21.5 L128 34.5 L110 47.5 Z"/><path d="M128 21.5 L145 34.5 L128 47.5 Z"/>
</g>
<path d="M185.5 21.5 L206.5 34.5 L185.5 47.5 Z" fill="#e8483c" stroke="#e8483c" stroke-width="1.2" stroke-linejoin="round"/>
<rect x="246" y="21" width="26" height="27" rx="1.5" fill="#8a8a8a"/>
<circle cx="322.7" cy="34.5" r="12.8" fill="#8a8a8a"/>
<g fill="none" stroke="#e8483c" stroke-width="4.4" stroke-linecap="round" stroke-linejoin="round">
 <path d="M398 26.4 L384 26.4 A9.6 9.6 0 0 0 384 45.7 L402.5 45.7 A9.6 9.6 0 0 0 404.5 26.6"/>
 <path d="M388.5 19 L398.2 26.4 L388.5 35"/>
</g>
<g fill="none" stroke-width="2.6">
 <path d="M503.5 28 Q507 24.5 510.8 23.5" stroke="#a8392f"/>
 <path d="M519.3 25.5 L535.8 39.5" stroke="#a8392f"/>
 <path d="M545 36 L549.7 32.2" stroke="#a8392f"/>
 <circle cx="515.6" cy="21.8" r="5" stroke="#e8483c"/>
 <circle cx="539.9" cy="38" r="5" stroke="#e8483c"/>
 <rect x="501.2" y="39.5" width="26.4" height="14.2" rx="7.1" stroke="#e8483c"/>
</g>
<circle cx="520" cy="46.6" r="5" fill="#e8483c"/>
<g fill="none" stroke-width="2.6">
 <path d="M579 28 Q582.5 24.5 586.5 23.5" stroke="#5c5c5e"/>
 <path d="M595.5 25.5 L611.5 39.5" stroke="#5c5c5e"/>
 <path d="M621 36 L626 32.2" stroke="#5c5c5e"/>
 <circle cx="592" cy="21.8" r="5" stroke="#8a8a8a"/>
 <circle cx="615.7" cy="38" r="5" stroke="#8a8a8a"/>
</g>
<g transform="translate(587.9,43.8)" fill="#8a8a8a">
 <path d="M-2 -12 L2 -12 L2.6 -8.6 L5.6 -7.4 L8.5 -9.4 L11.3 -6.6 L9.3 -3.7 L10.5 -0.7 L12 -0.3 L12 3.7 L10.5 4.1 L9.3 7.1 L11.3 10 L8.5 12.8 L5.6 10.8 L2.6 12 L2 15.4 L-2 15.4 L-2.6 12 L-5.6 10.8 L-8.5 12.8 L-11.3 10 L-9.3 7.1 L-10.5 4.1 L-12 3.7 L-12 -0.3 L-10.5 -0.7 L-9.3 -3.7 L-11.3 -6.6 L-8.5 -9.4 L-5.6 -7.4 L-2.6 -8.6 Z" transform="translate(0,-1.7)"/>
 <circle cx="0" cy="0" r="5" fill="#232328"/>
</g>
</svg>
<div style="left:1446px;top:669px;width:2px;height:57px;background:#3c3c40"></div>
<svg style="position:absolute;left:2365px;top:684px;" width="40" height="26" viewBox="0 0 40 26"><g fill="none" stroke="#8a8a8a" stroke-width="2.6" stroke-linecap="round" stroke-linejoin="round">
 <line x1="5" y1="13" x2="9" y2="13"/><line x1="13" y1="13" x2="17" y2="13"/><line x1="21" y1="13" x2="31" y2="13"/>
 <path d="M24 6 L31.5 13 L24 20"/></g></svg>
<svg style="position:absolute;left:2525px;top:675px;" width="50" height="40" viewBox="0 0 50 40"><path d="M9 13 L15 13 L23.5 6.5 Q25 5.8 25 7.5 L25 32.5 Q25 34.2 23.5 33.5 L15 27 L9 27 Z" fill="#f0f0f0"/>
<g fill="none" stroke-linecap="round"><path d="M30 15.5 Q33 20 30 24.5" stroke="#c8c8c8" stroke-width="3.2"/><path d="M35.5 10.5 Q42 20 35.5 29.5" stroke="#9a9a9a" stroke-width="3.2"/></g></svg>
<svg style="position:absolute;left:500px;top:750px;" width="1800" height="70" viewBox="0 0 1800 70">
<g fill="none" stroke="#8a8a8a" stroke-width="1.7">
 <rect x="12.8" y="18.6" width="40.6" height="8.6" rx="1.6"/>
 <line x1="25" y1="18.6" x2="25" y2="27.2"/><line x1="41" y1="18.6" x2="41" y2="27.2"/>
</g>
<rect x="16" y="30.2" width="37.7" height="7.4" rx="2" fill="#38383d"/>
<rect x="12.4" y="40.3" width="29.6" height="7.5" rx="2" fill="#38383d"/>
<line x1="18" y1="35" x2="26" y2="35" stroke="#8a8a8a" stroke-width="1.6"/>
<line x1="14" y1="45" x2="22" y2="45" stroke="#8a8a8a" stroke-width="1.6"/>
<path d="M42.6 40 L48.8 48.8 L61.2 32.6" fill="none" stroke="#222226" stroke-width="7"/>
<path d="M42.6 40 L48.8 48.8 L61.2 32.6" fill="none" stroke="#8a8a8a" stroke-width="3.4" stroke-linecap="round" stroke-linejoin="round"/>
<g fill="none" stroke="#8a8a8a" stroke-width="1.8">
 <rect x="95" y="17" width="40.5" height="31" rx="1.5"/>
 <line x1="105" y1="17" x2="105" y2="48"/><line x1="115" y1="17" x2="115" y2="48"/><line x1="125" y1="17" x2="125" y2="48"/>
</g>
<g stroke="#6a6a6c" stroke-width="1.4"><line x1="95" y1="27" x2="135.5" y2="27"/><line x1="95" y1="37" x2="135.5" y2="37"/></g>
<path d="M446 16 L467.2 35 L457.8 36.6 L462.6 46 Q463 47.5 461.6 48.6 Q460 49.5 459.2 48 L454.5 38.6 L446.5 45.2 Q446 45.5 446 44.5 Z" fill="#e8483c"/>
<g stroke="#8a8a8a" stroke-width="4" stroke-linecap="round">
 <line x1="535.8" y1="16.5" x2="535.8" y2="29"/><line x1="535.8" y1="39" x2="535.8" y2="51.5"/>
 <line x1="518.5" y1="34" x2="531" y2="34"/><line x1="540.8" y1="34" x2="553.5" y2="34"/>
</g>
<rect x="586" y="14" width="60" height="41.7" fill="#2c2c31"/>
<rect x="592" y="14" width="16" height="41.7" fill="#303036"/>
<rect x="586" y="14" width="60" height="3.3" fill="#3a3a40"/>
<rect x="586" y="52.4" width="60" height="3.3" fill="#3a3a40"/>
<g stroke="#4a4a50" stroke-width="1.2"><line x1="590" y1="17" x2="590" y2="25"/><line x1="596" y1="17" x2="596" y2="22"/><line x1="602" y1="17" x2="602" y2="25"/><line x1="608" y1="17" x2="608" y2="22"/><line x1="614" y1="17" x2="614" y2="25"/><line x1="620" y1="17" x2="620" y2="22"/><line x1="626" y1="17" x2="626" y2="25"/><line x1="632" y1="17" x2="632" y2="22"/><line x1="638" y1="17" x2="638" y2="25"/><line x1="644" y1="17" x2="644" y2="22"/></g>
<line x1="607" y1="14.5" x2="607" y2="20.5" stroke="#d0d0d0" stroke-width="1.4"/>
<g stroke="#8a8a8a" stroke-width="3.2" stroke-linecap="round"><line x1="607" y1="25.6" x2="607" y2="48"/><line x1="601.5" y1="25.6" x2="612.8" y2="25.6"/><line x1="601.5" y1="48" x2="612.8" y2="48"/></g>
<path d="M621 46 Q619.5 43.5 621.5 42.5 Q623 42.2 624.5 44 L625 38 Q625.2 36 627 36 Q628.8 36.3 628.5 38.5 L629 36.5 Q629.3 34.6 631 34.7 Q632.8 35 632.6 37.2 L632.8 38 Q633.2 36.3 634.8 36.5 Q636.4 37 636.2 39 L636 41 Q636.5 39.8 637.8 40.2 Q639.2 40.8 638.8 42.8 L637.5 50 Q636 57.5 629.5 58.5 Q624.5 58.8 622 53 Z" fill="#8a8a8a"/>
<g fill="none" stroke="#8a8a8a" stroke-width="2.6" stroke-linecap="round" stroke-dasharray="4 3.4">
 <path d="M671.5 34.6 Q675 48 690.7 53"/>
</g>
<path d="M695.5 50.6 L712.5 24 Q714.5 21 717.5 22.8 Q720.3 24.8 718.5 27.8 L701.5 54.3 L694.5 57.4 Z" fill="#8a8a8a"/>
<path d="M697.8 50.3 L700.8 52.4 L696.7 54.2 Z" fill="#222226"/>
<line x1="711" y1="27" x2="717" y2="31" stroke="#222226" stroke-width="1.4"/>
<line x1="799" y1="6.4" x2="799" y2="25.6" stroke="#8a8a8a" stroke-width="1.6" stroke-dasharray="3 2.5"/>
<line x1="790.5" y1="14.5" x2="795.5" y2="27" stroke="#55555a" stroke-width="3.2" stroke-linecap="round"/>
<g fill="none" stroke="#8a8a8a" stroke-width="3">
 <path d="M806.6 15 L796 36.5 L793.5 42"/>
 <path d="M798.5 34 L802 38.5 L805 42.5"/>
 <circle cx="788" cy="42.9" r="5.8"/><circle cx="809.2" cy="42.9" r="5.8"/>
</g>
<g fill="none" stroke="#f4f4f4" stroke-width="4.5">
 <path d="M878.4 20.5 L869.5 30 A10.6 10.6 0 0 0 884.5 45 L893.4 36.1"/>
 <line x1="880.5" y1="18.4" x2="884.3" y2="14.6"/><line x1="895.5" y1="34" x2="899.3" y2="30.2"/>
</g>
<g fill="none" stroke="#f4f4f4" stroke-width="4.2">
 <rect x="-12" y="-6.5" width="24" height="13" rx="6.5" transform="translate(965.4,28.2) rotate(-45)"/>
 <rect x="-12" y="-6.5" width="24" height="13" rx="6.5" transform="translate(951.4,39.7) rotate(-45)"/>
</g>
<g fill="none" stroke="#8a8a8a" stroke-width="2.6" stroke-linejoin="round">
 <path d="M1037 17 L1014.3 17 L1014.3 50 L1062.5 50 L1062.5 26"/>
 <path d="M1057 11 L1063.5 17.3 L1057 23.5"/>
</g>
<g stroke="#8a8a8a" stroke-width="2.6"><line x1="1041" y1="17.3" x2="1045" y2="17.3"/><line x1="1049" y1="17.3" x2="1063" y2="17.3"/></g>
<g stroke="#f4f4f4" stroke-width="2.4" fill="#f4f4f4">
 <line x1="1518.7" y1="32.7" x2="1527.6" y2="27.5" transform="translate(-500,0)"/>
 <line x1="1527.6" y1="27.5" x2="1547.5" y2="39.7" transform="translate(-500,0)"/>
 <line x1="1547.5" y1="39.7" x2="1557" y2="37.2" transform="translate(-500,0)"/>
 <circle cx="1027.6" cy="27.5" r="4.3" stroke="none"/><circle cx="1047.5" cy="39.7" r="4.3" stroke="none"/>
</g>
<path d="M1117.1 21.4 L1139 21.4 L1139 47 L1128 39.6 L1117.1 47 Z" fill="#0080e0" stroke="#000" stroke-width="1.6" stroke-linejoin="round"/>
<path d="M1158.3 30.2 L1167 40 L1175.9 30.2" fill="none" stroke="#8a8a8a" stroke-width="2.8"/>
<path d="M1205.4 26 Q1205.4 21.4 1210 21.4 L1221.8 21.4 Q1226.4 21.4 1226.4 26 L1226.4 39.3 L1215.9 45.7 L1205.4 39.3 Z" fill="#0080e0" stroke="#000" stroke-width="1.6" stroke-linejoin="round"/>
<path d="M1246 30.2 L1254.9 40 L1263.7 30.2" fill="none" stroke="#8a8a8a" stroke-width="2.8"/>
<line x1="1310" y1="39" x2="1365.5" y2="39" stroke="#8a8a8a" stroke-width="1.4"/>
<path d="M1312 26.7 Q1316 27 1318 36 Q1320.5 50.6 1322.7 50.6 Q1325.5 50.6 1328 33 Q1330.5 17.6 1332.5 17.6 Q1335 17.6 1337.5 35 Q1340 54 1342.3 54 Q1345 54 1347.5 40 Q1350 28.8 1352.9 28.8 Q1356 28.8 1359 40 Q1361.5 47.8 1364 47.8" fill="none" stroke="#8a8a8a" stroke-width="2.2" stroke-linecap="round"/>
<path d="M1344.4 10.5 Q1352.5 10.5 1352.9 16 L1352.9 24" fill="none" stroke="#8a8a8a" stroke-width="2" stroke-linecap="round"/>
<path d="M1348 20.5 L1352.9 25 L1357.8 20.5" fill="none" stroke="#8a8a8a" stroke-width="2" stroke-linecap="round"/>
<g fill="none" stroke="#8a8a8a" stroke-width="2.4" stroke-linecap="round" stroke-linejoin="round">
 <path d="M1407 28.5 L1414 21 L1421 28.5"/><path d="M1407 39.5 L1414 47 L1421 39.5"/>
</g>
<circle cx="1414" cy="33.7" r="2.2" fill="#8a8a8a"/>
<g fill="none" stroke="#8a8a8a" stroke-width="2.9" stroke-linecap="round" stroke-linejoin="round">
 <path d="M1675.5 28 L1669.5 34.5 L1675.5 41"/><path d="M1689 28 L1695 34.5 L1689 41"/>
</g>
<circle cx="1682.2" cy="34.5" r="1.8" fill="#8a8a8a"/>
</svg>
<div style="left:0px;top:792px;width:460px;height:2px;background:#0e0e10"></div>
<div style="left:0px;top:852px;width:460px;height:2px;background:#0e0e10"></div>
<div style="left:0px;top:912px;width:460px;height:2px;background:#0e0e10"></div>
<div style="left:460px;top:734px;width:2px;height:182px;background:#0e0e10"></div>
<svg style="position:absolute;left:60px;top:745px;" width="40" height="160" viewBox="0 0 40 160"><g fill="#8a8a8a">
<path d="M71.5 10 L83 17 L71.5 24 Q70.5 24.5 70.5 23.3 L70.5 10.7 Q70.5 9.5 71.5 10 Z" transform="translate(-60,0)"/>
<rect x="23.5" y="7" width="2.6" height="20" rx="1"/>
<rect x="12" y="67.6" width="2.4" height="19" rx="1"/>
<path d="M86.3 68.5 L74.5 77 L86.3 86 Q87.3 86.5 87.3 85.3 L87.3 69.7 Q87.3 68.5 86.3 68.5 Z" transform="translate(-60,0)"/>
</g>
<g fill="none" stroke="#8a8a8a" stroke-width="2"><circle cx="19.9" cy="136.9" r="11"/><path d="M19 129 L19 137.5 L26 137.5"/></g></svg>
<div style="left:143px;top:750.6px;font-size:26.5px;line-height:26.5px;color:#8e8e8e;font-weight:700;white-space:nowrap;transform:scaleX(0.956);transform-origin:0 50%;">00:00:06:56</div>
<div style="left:143px;top:810.6px;font-size:26.5px;line-height:26.5px;color:#8e8e8e;font-weight:700;white-space:nowrap;transform:scaleX(0.956);transform-origin:0 50%;">00:00:06:56</div>
<div style="left:143px;top:871.1px;font-size:26.5px;line-height:26.5px;color:#8e8e8e;font-weight:700;white-space:nowrap;transform:scaleX(0.956);transform-origin:0 50%;">00:00:00:00</div>
<div style="left:1247px;top:755px;width:2px;height:60px;background:#3c3c40"></div>
<div style="left:1589px;top:755px;width:2px;height:60px;background:#3c3c40"></div>
<div style="left:1787px;top:755px;width:2px;height:60px;background:#3c3c40"></div>
<div style="left:1957px;top:782px;width:183px;height:6px;border-radius:3px;background:#17171a"></div>
<div style="left:1974px;top:776px;width:18px;height:18px;border-radius:50%;background:#9c9c9c"></div>
<div style="left:2224px;top:782px;width:184px;height:6px;border-radius:3px;background:#17171a"></div>
<div style="left:2298px;top:776px;width:18px;height:18px;border-radius:50%;background:#9c9c9c"></div>
<div style="left:462px;top:834px;width:2418px;height:2px;background:#0e0e10"></div>
<div style="left:462px;top:836px;width:2398px;height:78px;background:#28282e"></div>
<svg style="position:absolute;left:462px;top:836px;" width="2398" height="78" viewBox="0 0 2398 78"><line x1="1" y1="8" x2="1" y2="20" stroke="#4a4d55" stroke-width="2"/><line x1="13" y1="8" x2="13" y2="14" stroke="#4a4d55" stroke-width="2"/><line x1="25" y1="8" x2="25" y2="20" stroke="#4a4d55" stroke-width="2"/><line x1="37" y1="8" x2="37" y2="14" stroke="#4a4d55" stroke-width="2"/><line x1="49" y1="8" x2="49" y2="20" stroke="#4a4d55" stroke-width="2"/><line x1="61" y1="8" x2="61" y2="14" stroke="#4a4d55" stroke-width="2"/><line x1="85" y1="8" x2="85" y2="14" stroke="#4a4d55" stroke-width="2"/><line x1="97" y1="8" x2="97" y2="20" stroke="#4a4d55" stroke-width="2"/><line x1="109" y1="8" x2="109" y2="14" stroke="#4a4d55" stroke-width="2"/><line x1="121" y1="8" x2="121" y2="20" stroke="#4a4d55" stroke-width="2"/><line x1="133" y1="8" x2="133" y2="14" stroke="#4a4d55" stroke-width="2"/><line x1="145" y1="8" x2="145" y2="20" stroke="#4a4d55" stroke-width="2"/><line x1="157" y1="8" x2="157" y2="14" stroke="#4a4d55" stroke-width="2"/><line x1="169" y1="8" x2="169" y2="20" stroke="#4a4d55" stroke-width="2"/><line x1="181" y1="8" x2="181" y2="14" stroke="#4a4d55" stroke-width="2"/><line x1="193" y1="8" x2="193" y2="20" stroke="#4a4d55" stroke-width="2"/><line x1="205" y1="8" x2="205" y2="14" stroke="#4a4d55" stroke-width="2"/><line x1="217" y1="8" x2="217" y2="20" stroke="#4a4d55" stroke-width="2"/><line x1="229" y1="8" x2="229" y2="14" stroke="#4a4d55" stroke-width="2"/><line x1="241" y1="8" x2="241" y2="20" stroke="#4a4d55" stroke-width="2"/><line x1="253" y1="8" x2="253" y2="14" stroke="#4a4d55" stroke-width="2"/><line x1="265" y1="8" x2="265" y2="20" stroke="#4a4d55" stroke-width="2"/><line x1="277" y1="8" x2="277" y2="14" stroke="#4a4d55" stroke-width="2"/><line x1="289" y1="8" x2="289" y2="20" stroke="#4a4d55" stroke-width="2"/><line x1="301" y1="8" x2="301" y2="14" stroke="#4a4d55" stroke-width="2"/><line x1="313" y1="8" x2="313" y2="20" stroke="#4a4d55" stroke-width="2"/><line x1="325" y1="8" x2="325" y2="14" stroke="#4a4d55" stroke-width="2"/><line x1="337" y1="8" x2="337" y2="20" stroke="#4a4d55" stroke-width="2"/><line x1="349" y1="8" x2="349" y2="14" stroke="#4a4d55" stroke-width="2"/><line x1="361" y1="8" x2="361" y2="20" stroke="#4a4d55" stroke-width="2"/><line x1="373" y1="8" x2="373" y2="14" stroke="#4a4d55" stroke-width="2"/><line x1="385" y1="8" x2="385" y2="20" stroke="#4a4d55" stroke-width="2"/><line x1="397" y1="8" x2="397" y2="14" stroke="#4a4d55" stroke-width="2"/><line x1="409" y1="8" x2="409" y2="20" stroke="#4a4d55" stroke-width="2"/><line x1="421" y1="8" x2="421" y2="14" stroke="#4a4d55" stroke-width="2"/><line x1="445" y1="8" x2="445" y2="14" stroke="#4a4d55" stroke-width="2"/><line x1="457" y1="8" x2="457" y2="20" stroke="#4a4d55" stroke-width="2"/><line x1="469" y1="8" x2="469" y2="14" stroke="#4a4d55" stroke-width="2"/><line x1="481" y1="8" x2="481" y2="20" stroke="#4a4d55" stroke-width="2"/><line x1="493" y1="8" x2="493" y2="14" stroke="#4a4d55" stroke-width="2"/><line x1="505" y1="8" x2="505" y2="20" stroke="#4a4d55" stroke-width="2"/><line x1="517" y1="8" x2="517" y2="14" stroke="#4a4d55" stroke-width="2"/><line x1="529" y1="8" x2="529" y2="20" stroke="#4a4d55" stroke-width="2"/><line x1="541" y1="8" x2="541" y2="14" stroke="#4a4d55" stroke-width="2"/><line x1="553" y1="8" x2="553" y2="20" stroke="#4a4d55" stroke-width="2"/><line x1="565" y1="8" x2="565" y2="14" stroke="#4a4d55" stroke-width="2"/><line x1="577" y1="8" x2="577" y2="20" stroke="#4a4d55" stroke-width="2"/><line x1="589" y1="8" x2="589" y2="14" stroke="#4a4d55" stroke-width="2"/><line x1="601" y1="8" x2="601" y2="20" stroke="#4a4d55" stroke-width="2"/><line x1="613" y1="8" x2="613" y2="14" stroke="#4a4d55" stroke-width="2"/><line x1="625" y1="8" x2="625" y2="20" stroke="#4a4d55" stroke-width="2"/><line x1="637" y1="8" x2="637" y2="14" stroke="#4a4d55" stroke-width="2"/><line x1="649" y1="8" x2="649" y2="20" stroke="#4a4d55" stroke-width="2"/><line x1="661" y1="8" x2="661" y2="14" stroke="#4a4d55" stroke-width="2"/><line x1="673" y1="8" x2="673" y2="20" stroke="#4a4d55" stroke-width="2"/><line x1="685" y1="8" x2="685" y2="14" stroke="#4a4d55" stroke-width="2"/><line x1="697" y1="8" x2="697" y2="20" stroke="#4a4d55" stroke-width="2"/><line x1="709" y1="8" x2="709" y2="14" stroke="#4a4d55" stroke-width="2"/><line x1="721" y1="8" x2="721" y2="20" stroke="#4a4d55" stroke-width="2"/><line x1="733" y1="8" x2="733" y2="14" stroke="#4a4d55" stroke-width="2"/><line x1="745" y1="8" x2="745" y2="20" stroke="#4a4d55" stroke-width="2"/><line x1="757" y1="8" x2="757" y2="14" stroke="#4a4d55" stroke-width="2"/><line x1="769" y1="8" x2="769" y2="20" stroke="#4a4d55" stroke-width="2"/><line x1="781" y1="8" x2="781" y2="14" stroke="#4a4d55" stroke-width="2"/><line x1="805" y1="8" x2="805" y2="14" stroke="#4a4d55" stroke-width="2"/><line x1="817" y1="8" x2="817" y2="20" stroke="#4a4d55" stroke-width="2"/><line x1="829" y1="8" x2="829" y2="14" stroke="#4a4d55" stroke-width="2"/><line x1="841" y1="8" x2="841" y2="20" stroke="#4a4d55" stroke-width="2"/><line x1="853" y1="8" x2="853" y2="14" stroke="#4a4d55" stroke-width="2"/><line x1="865" y1="8" x2="865" y2="20" stroke="#4a4d55" stroke-width="2"/><line x1="877" y1="8" x2="877" y2="14" stroke="#4a4d55" stroke-width="2"/><line x1="889" y1="8" x2="889" y2="20" stroke="#4a4d55" stroke-width="2"/><line x1="901" y1="8" x2="901" y2="14" stroke="#4a4d55" stroke-width="2"/><line x1="913" y1="8" x2="913" y2="20" stroke="#4a4d55" stroke-width="2"/><line x1="925" y1="8" x2="925" y2="14" stroke="#4a4d55" stroke-width="2"/><line x1="937" y1="8" x2="937" y2="20" stroke="#4a4d55" stroke-width="2"/><line x1="949" y1="8" x2="949" y2="14" stroke="#4a4d55" stroke-width="2"/><line x1="961" y1="8" x2="961" y2="20" stroke="#4a4d55" stroke-width="2"/><line x1="973" y1="8" x2="973" y2="14" stroke="#4a4d55" stroke-width="2"/><line x1="985" y1="8" x2="985" y2="20" stroke="#4a4d55" stroke-width="2"/><line x1="997" y1="8" x2="997" y2="14" stroke="#4a4d55" stroke-width="2"/><line x1="1009" y1="8" x2="1009" y2="20" stroke="#4a4d55" stroke-width="2"/><line x1="1021" y1="8" x2="1021" y2="14" stroke="#4a4d55" stroke-width="2"/><line x1="1033" y1="8" x2="1033" y2="20" stroke="#4a4d55" stroke-width="2"/><line x1="1045" y1="8" x2="1045" y2="14" stroke="#4a4d55" stroke-width="2"/><line x1="1057" y1="8" x2="1057" y2="20" stroke="#4a4d55" stroke-width="2"/><line x1="1069" y1="8" x2="1069" y2="14" stroke="#4a4d55" stroke-width="2"/><line x1="1081" y1="8" x2="1081" y2="20" stroke="#4a4d55" stroke-width="2"/><line x1="1093" y1="8" x2="1093" y2="14" stroke="#4a4d55" stroke-width="2"/><line x1="1105" y1="8" x2="1105" y2="20" stroke="#4a4d55" stroke-width="2"/><line x1="1117" y1="8" x2="1117" y2="14" stroke="#4a4d55" stroke-width="2"/><line x1="1129" y1="8" x2="1129" y2="20" stroke="#4a4d55" stroke-width="2"/><line x1="1141" y1="8" x2="1141" y2="14" stroke="#4a4d55" stroke-width="2"/><line x1="1165" y1="8" x2="1165" y2="14" stroke="#4a4d55" stroke-width="2"/><line x1="1177" y1="8" x2="1177" y2="20" stroke="#4a4d55" stroke-width="2"/><line x1="1189" y1="8" x2="1189" y2="14" stroke="#4a4d55" stroke-width="2"/><line x1="1201" y1="8" x2="1201" y2="20" stroke="#4a4d55" stroke-width="2"/><line x1="1213" y1="8" x2="1213" y2="14" stroke="#4a4d55" stroke-width="2"/><line x1="1225" y1="8" x2="1225" y2="20" stroke="#4a4d55" stroke-width="2"/><line x1="1237" y1="8" x2="1237" y2="14" stroke="#4a4d55" stroke-width="2"/><line x1="1249" y1="8" x2="1249" y2="20" stroke="#4a4d55" stroke-width="2"/><line x1="1261" y1="8" x2="1261" y2="14" stroke="#4a4d55" stroke-width="2"/><line x1="1273" y1="8" x2="1273" y2="20" stroke="#4a4d55" stroke-width="2"/><line x1="1285" y1="8" x2="1285" y2="14" stroke="#4a4d55" stroke-width="2"/><line x1="1297" y1="8" x2="1297" y2="20" stroke="#4a4d55" stroke-width="2"/><line x1="1309" y1="8" x2="1309" y2="14" stroke="#4a4d55" stroke-width="2"/><line x1="1321" y1="8" x2="1321" y2="20" stroke="#4a4d55" stroke-width="2"/><line x1="1333" y1="8" x2="1333" y2="14" stroke="#4a4d55" stroke-width="2"/><line x1="1345" y1="8" x2="1345" y2="20" stroke="#4a4d55" stroke-width="2"/><line x1="1357" y1="8" x2="1357" y2="14" stroke="#4a4d55" stroke-width="2"/><line x1="1369" y1="8" x2="1369" y2="20" stroke="#4a4d55" stroke-width="2"/><line x1="1381" y1="8" x2="1381" y2="14" stroke="#4a4d55" stroke-width="2"/><line x1="1393" y1="8" x2="1393" y2="20" stroke="#4a4d55" stroke-width="2"/><line x1="1405" y1="8" x2="1405" y2="14" stroke="#4a4d55" stroke-width="2"/><line x1="1417" y1="8" x2="1417" y2="20" stroke="#4a4d55" stroke-width="2"/><line x1="1429" y1="8" x2="1429" y2="14" stroke="#4a4d55" stroke-width="2"/><line x1="1441" y1="8" x2="1441" y2="20" stroke="#4a4d55" stroke-width="2"/><line x1="1453" y1="8" x2="1453" y2="14" stroke="#4a4d55" stroke-width="2"/><line x1="1465" y1="8" x2="1465" y2="20" stroke="#4a4d55" stroke-width="2"/><line x1="1477" y1="8" x2="1477" y2="14" stroke="#4a4d55" stroke-width="2"/><line x1="1489" y1="8" x2="1489" y2="20" stroke="#4a4d55" stroke-width="2"/><line x1="1501" y1="8" x2="1501" y2="14" stroke="#4a4d55" stroke-width="2"/><line x1="1525" y1="8" x2="1525" y2="14" stroke="#4a4d55" stroke-width="2"/><line x1="1537" y1="8" x2="1537" y2="20" stroke="#4a4d55" stroke-width="2"/><line x1="1549" y1="8" x2="1549" y2="14" stroke="#4a4d55" stroke-width="2"/><line x1="1561" y1="8" x2="1561" y2="20" stroke="#4a4d55" stroke-width="2"/><line x1="1573" y1="8" x2="1573" y2="14" stroke="#4a4d55" stroke-width="2"/><line x1="1585" y1="8" x2="1585" y2="20" stroke="#4a4d55" stroke-width="2"/><line x1="1597" y1="8" x2="1597" y2="14" stroke="#4a4d55" stroke-width="2"/><line x1="1609" y1="8" x2="1609" y2="20" stroke="#4a4d55" stroke-width="2"/><line x1="1621" y1="8" x2="1621" y2="14" stroke="#4a4d55" stroke-width="2"/><line x1="1633" y1="8" x2="1633" y2="20" stroke="#4a4d55" stroke-width="2"/><line x1="1645" y1="8" x2="1645" y2="14" stroke="#4a4d55" stroke-width="2"/><line x1="1657" y1="8" x2="1657" y2="20" stroke="#4a4d55" stroke-width="2"/><line x1="1669" y1="8" x2="1669" y2="14" stroke="#4a4d55" stroke-width="2"/><line x1="1681" y1="8" x2="1681" y2="20" stroke="#4a4d55" stroke-width="2"/><line x1="1693" y1="8" x2="1693" y2="14" stroke="#4a4d55" stroke-width="2"/><line x1="1705" y1="8" x2="1705" y2="20" stroke="#4a4d55" stroke-width="2"/><line x1="1717" y1="8" x2="1717" y2="14" stroke="#4a4d55" stroke-width="2"/><line x1="1729" y1="8" x2="1729" y2="20" stroke="#4a4d55" stroke-width="2"/><line x1="1741" y1="8" x2="1741" y2="14" stroke="#4a4d55" stroke-width="2"/><line x1="1753" y1="8" x2="1753" y2="20" stroke="#4a4d55" stroke-width="2"/><line x1="1765" y1="8" x2="1765" y2="14" stroke="#4a4d55" stroke-width="2"/><line x1="1777" y1="8" x2="1777" y2="20" stroke="#4a4d55" stroke-width="2"/><line x1="1789" y1="8" x2="1789" y2="14" stroke="#4a4d55" stroke-width="2"/><line x1="1801" y1="8" x2="1801" y2="20" stroke="#4a4d55" stroke-width="2"/><line x1="1813" y1="8" x2="1813" y2="14" stroke="#4a4d55" stroke-width="2"/><line x1="1825" y1="8" x2="1825" y2="20" stroke="#4a4d55" stroke-width="2"/><line x1="1837" y1="8" x2="1837" y2="14" stroke="#4a4d55" stroke-width="2"/><line x1="1849" y1="8" x2="1849" y2="20" stroke="#4a4d55" stroke-width="2"/><line x1="1861" y1="8" x2="1861" y2="14" stroke="#4a4d55" stroke-width="2"/><line x1="1885" y1="8" x2="1885" y2="14" stroke="#4a4d55" stroke-width="2"/><line x1="1897" y1="8" x2="1897" y2="20" stroke="#4a4d55" stroke-width="2"/><line x1="1909" y1="8" x2="1909" y2="14" stroke="#4a4d55" stroke-width="2"/><line x1="1921" y1="8" x2="1921" y2="20" stroke="#4a4d55" stroke-width="2"/><line x1="1933" y1="8" x2="1933" y2="14" stroke="#4a4d55" stroke-width="2"/><line x1="1945" y1="8" x2="1945" y2="20" stroke="#4a4d55" stroke-width="2"/><line x1="1957" y1="8" x2="1957" y2="14" stroke="#4a4d55" stroke-width="2"/><line x1="1969" y1="8" x2="1969" y2="20" stroke="#4a4d55" stroke-width="2"/><line x1="1981" y1="8" x2="1981" y2="14" stroke="#4a4d55" stroke-width="2"/><line x1="1993" y1="8" x2="1993" y2="20" stroke="#4a4d55" stroke-width="2"/><line x1="2005" y1="8" x2="2005" y2="14" stroke="#4a4d55" stroke-width="2"/><line x1="2017" y1="8" x2="2017" y2="20" stroke="#4a4d55" stroke-width="2"/><line x1="2029" y1="8" x2="2029" y2="14" stroke="#4a4d55" stroke-width="2"/><line x1="2041" y1="8" x2="2041" y2="20" stroke="#4a4d55" stroke-width="2"/><line x1="2053" y1="8" x2="2053" y2="14" stroke="#4a4d55" stroke-width="2"/><line x1="2065" y1="8" x2="2065" y2="20" stroke="#4a4d55" stroke-width="2"/><line x1="2077" y1="8" x2="2077" y2="14" stroke="#4a4d55" stroke-width="2"/><line x1="2089" y1="8" x2="2089" y2="20" stroke="#4a4d55" stroke-width="2"/><line x1="2101" y1="8" x2="2101" y2="14" stroke="#4a4d55" stroke-width="2"/><line x1="2113" y1="8" x2="2113" y2="20" stroke="#4a4d55" stroke-width="2"/><line x1="2125" y1="8" x2="2125" y2="14" stroke="#4a4d55" stroke-width="2"/><line x1="2137" y1="8" x2="2137" y2="20" stroke="#4a4d55" stroke-width="2"/><line x1="2149" y1="8" x2="2149" y2="14" stroke="#4a4d55" stroke-width="2"/><line x1="2161" y1="8" x2="2161" y2="20" stroke="#4a4d55" stroke-width="2"/><line x1="2173" y1="8" x2="2173" y2="14" stroke="#4a4d55" stroke-width="2"/><line x1="2185" y1="8" x2="2185" y2="20" stroke="#4a4d55" stroke-width="2"/><line x1="2197" y1="8" x2="2197" y2="14" stroke="#4a4d55" stroke-width="2"/><line x1="2209" y1="8" x2="2209" y2="20" stroke="#4a4d55" stroke-width="2"/><line x1="2221" y1="8" x2="2221" y2="14" stroke="#4a4d55" stroke-width="2"/><line x1="2245" y1="8" x2="2245" y2="14" stroke="#4a4d55" stroke-width="2"/><line x1="2257" y1="8" x2="2257" y2="20" stroke="#4a4d55" stroke-width="2"/><line x1="2269" y1="8" x2="2269" y2="14" stroke="#4a4d55" stroke-width="2"/><line x1="2281" y1="8" x2="2281" y2="20" stroke="#4a4d55" stroke-width="2"/><line x1="2293" y1="8" x2="2293" y2="14" stroke="#4a4d55" stroke-width="2"/><line x1="2305" y1="8" x2="2305" y2="20" stroke="#4a4d55" stroke-width="2"/><line x1="2317" y1="8" x2="2317" y2="14" stroke="#4a4d55" stroke-width="2"/><line x1="2329" y1="8" x2="2329" y2="20" stroke="#4a4d55" stroke-width="2"/><line x1="2341" y1="8" x2="2341" y2="14" stroke="#4a4d55" stroke-width="2"/><line x1="2353" y1="8" x2="2353" y2="20" stroke="#4a4d55" stroke-width="2"/><line x1="2365" y1="8" x2="2365" y2="14" stroke="#4a4d55" stroke-width="2"/><line x1="2377" y1="8" x2="2377" y2="20" stroke="#4a4d55" stroke-width="2"/><line x1="2389" y1="8" x2="2389" y2="14" stroke="#4a4d55" stroke-width="2"/></svg>
<div style="left:462px;top:836px;width:50px;height:78px;background:linear-gradient(90deg,rgba(0,0,0,0.35),rgba(0,0,0,0))"></div>
<div style="left:533px;top:844px;width:2px;height:50px;background:linear-gradient(180deg,#a0a0a0 0%,#707074 40%,rgba(80,80,85,0) 100%)"></div>
<div style="left:540.0px;top:863.1px;font-size:24.3px;line-height:24.3px;color:#9a9a9a;font-weight:400;white-space:nowrap;">00:01:30:00</div>
<div style="left:893px;top:844px;width:2px;height:50px;background:linear-gradient(180deg,#a0a0a0 0%,#707074 40%,rgba(80,80,85,0) 100%)"></div>
<div style="left:900.0px;top:863.1px;font-size:24.3px;line-height:24.3px;color:#9a9a9a;font-weight:400;white-space:nowrap;">00:01:33:00</div>
<div style="left:1253px;top:844px;width:2px;height:50px;background:linear-gradient(180deg,#a0a0a0 0%,#707074 40%,rgba(80,80,85,0) 100%)"></div>
<div style="left:1260.0px;top:863.1px;font-size:24.3px;line-height:24.3px;color:#9a9a9a;font-weight:400;white-space:nowrap;">00:01:36:00</div>
<div style="left:1613px;top:844px;width:2px;height:50px;background:linear-gradient(180deg,#a0a0a0 0%,#707074 40%,rgba(80,80,85,0) 100%)"></div>
<div style="left:1620.0px;top:863.1px;font-size:24.3px;line-height:24.3px;color:#9a9a9a;font-weight:400;white-space:nowrap;">00:01:39:00</div>
<div style="left:1973px;top:844px;width:2px;height:50px;background:linear-gradient(180deg,#a0a0a0 0%,#707074 40%,rgba(80,80,85,0) 100%)"></div>
<div style="left:1980.0px;top:863.1px;font-size:24.3px;line-height:24.3px;color:#9a9a9a;font-weight:400;white-space:nowrap;">00:01:42:00</div>
<div style="left:2333px;top:844px;width:2px;height:50px;background:linear-gradient(180deg,#a0a0a0 0%,#707074 40%,rgba(80,80,85,0) 100%)"></div>
<div style="left:2340.0px;top:863.1px;font-size:24.3px;line-height:24.3px;color:#9a9a9a;font-weight:400;white-space:nowrap;">00:01:45:00</div>
<div style="left:2693px;top:844px;width:2px;height:50px;background:linear-gradient(180deg,#a0a0a0 0%,#707074 40%,rgba(80,80,85,0) 100%)"></div>
<div style="left:2700.0px;top:863.1px;font-size:24.3px;line-height:24.3px;color:#9a9a9a;font-weight:400;white-space:nowrap;">00:01:48:00</div>
<div style="left:460px;top:914px;width:2420px;height:2px;background:#0e0e10"></div>
<div style="left:0px;top:916px;width:8px;height:260px;background:#3f8f5f"></div>
<div style="left:8px;top:916px;width:452px;height:260px;background:#222227"></div>
<div style="left:40px;top:916px;width:2px;height:260px;background:#0e0e10"></div>
<div style="left:120px;top:916px;width:2px;height:52px;background:#0e0e10"></div>
<div style="left:42px;top:968px;width:418px;height:2px;background:#0e0e10"></div>
<div style="left:386px;top:970px;width:2px;height:206px;background:#0e0e10"></div>
<div style="left:0px;top:1176px;width:460px;height:2px;background:#0e0e10"></div>
<div style="left:69px;top:929.8px;font-size:24px;line-height:24px;color:#eeeeee;font-weight:400;white-space:nowrap;transform:scaleX(0.9);transform-origin:0 50%;">A1</div>
<div style="left:144px;top:929.8px;font-size:24px;line-height:24px;color:#eeeeee;font-weight:400;white-space:nowrap;">Music</div>
<div style="right:2431px;top:929.8px;font-size:24px;line-height:24px;color:#8e8e8e;font-weight:400;white-space:nowrap;">2.0</div>
<div style="left:61px;top:978px;width:86px;height:43px;border:2px solid #111113;border-radius:5px;background:#1c1c1e"></div>
<div style="left:-396px;width:1000px;text-align:center;top:988.3px;font-size:23px;line-height:23px;color:#8e8e8e;font-weight:400;white-space:nowrap;">0.0</div>
<div style="left:226px;top:982px;width:36px;height:36px;border-radius:7px;background:#38383c"></div>
<div style="left:-256px;width:1000px;text-align:center;top:989.3px;font-size:22px;line-height:22px;color:#9a9a9a;font-weight:400;white-space:nowrap;">R</div>
<div style="left:282px;top:982px;width:36px;height:36px;border-radius:7px;background:#38383c"></div>
<div style="left:-200px;width:1000px;text-align:center;top:989.3px;font-size:22px;line-height:22px;color:#9a9a9a;font-weight:400;white-space:nowrap;">S</div>
<div style="left:338px;top:982px;width:36px;height:36px;border-radius:7px;background:#38383c"></div>
<div style="left:-144px;width:1000px;text-align:center;top:989.3px;font-size:22px;line-height:22px;color:#9a9a9a;font-weight:400;white-space:nowrap;">M</div>
<div style="left:61px;top:1036px;width:258px;height:47px;border:2px solid #0e0e10;border-radius:5px;background:#1e1e20"></div>
<div style="left:79px;top:1047.3px;font-size:25px;line-height:25px;color:#f0f0f0;font-weight:400;white-space:nowrap;">None</div>
<svg style="position:absolute;left:281px;top:1052px;" width="20" height="14" viewBox="0 0 20 14"><path d="M2 3 L10 11 L18 3" stroke="#9a9a9a" stroke-width="2.5" fill="none"/></svg>
<div style="left:69px;top:1104.3px;font-size:24px;line-height:24px;color:#8e8e8e;font-weight:400;white-space:nowrap;">1 Clip</div>
<svg style="position:absolute;left:170px;top:982px;" width="36" height="36" viewBox="0 0 36 36"><path d="M8.8 18 L8.8 16 A8.9 8.2 0 0 1 26.6 16 L26.6 18" fill="none" stroke="#f4f4f4" stroke-width="3"/><rect x="5.5" y="17.5" width="24.5" height="14.5" rx="2.6" fill="#f4f4f4"/></svg>
<svg style="position:absolute;left:332px;top:1044px;" width="50" height="30" viewBox="0 0 50 30"><g fill="none" stroke="#8a8a8a" stroke-width="2.1"><path d="M5 10 L13.5 5.8"/><circle cx="17" cy="8" r="3.6"/><path d="M19.7 8 L32.3 19"/><circle cx="35" cy="22.5" r="3.6"/><path d="M38.3 18.6 L44.8 13.8"/></g></svg>
<div style="left:410px;top:980px;width:26px;height:187px;border:2px solid #060608;background:#28282e"></div>
<div style="left:422px;top:980px;width:2px;height:187px;background:#060608"></div>
<div style="left:0px;top:1178px;width:8px;height:260px;background:#3f8f5f"></div>
<div style="left:8px;top:1178px;width:452px;height:260px;background:#222227"></div>
<div style="left:40px;top:1178px;width:2px;height:260px;background:#0e0e10"></div>
<div style="left:120px;top:1178px;width:2px;height:52px;background:#0e0e10"></div>
<div style="left:42px;top:1230px;width:418px;height:2px;background:#0e0e10"></div>
<div style="left:386px;top:1232px;width:2px;height:206px;background:#0e0e10"></div>
<div style="left:0px;top:1438px;width:460px;height:2px;background:#0e0e10"></div>
<div style="left:69px;top:1191.8px;font-size:24px;line-height:24px;color:#eeeeee;font-weight:400;white-space:nowrap;transform:scaleX(0.9);transform-origin:0 50%;">A2</div>
<div style="left:144px;top:1191.8px;font-size:24px;line-height:24px;color:#eeeeee;font-weight:400;white-space:nowrap;">vocal</div>
<div style="right:2431px;top:1191.8px;font-size:24px;line-height:24px;color:#8e8e8e;font-weight:400;white-space:nowrap;">1.0</div>
<div style="left:61px;top:1240px;width:86px;height:43px;border:2px solid #111113;border-radius:5px;background:#1c1c1e"></div>
<div style="left:-396px;width:1000px;text-align:center;top:1250.3px;font-size:23px;line-height:23px;color:#8e8e8e;font-weight:400;white-space:nowrap;">0.0</div>
<div style="left:226px;top:1244px;width:36px;height:36px;border-radius:7px;background:#38383c"></div>
<div style="left:-256px;width:1000px;text-align:center;top:1251.3px;font-size:22px;line-height:22px;color:#9a9a9a;font-weight:400;white-space:nowrap;">R</div>
<div style="left:282px;top:1244px;width:36px;height:36px;border-radius:7px;background:#38383c"></div>
<div style="left:-200px;width:1000px;text-align:center;top:1251.3px;font-size:22px;line-height:22px;color:#9a9a9a;font-weight:400;white-space:nowrap;">S</div>
<div style="left:338px;top:1244px;width:36px;height:36px;border-radius:7px;background:#38383c"></div>
<div style="left:-144px;width:1000px;text-align:center;top:1251.3px;font-size:22px;line-height:22px;color:#9a9a9a;font-weight:400;white-space:nowrap;">M</div>
<div style="left:61px;top:1298px;width:258px;height:47px;border:2px solid #0e0e10;border-radius:5px;background:#1e1e20"></div>
<div style="left:79px;top:1309.3px;font-size:25px;line-height:25px;color:#f0f0f0;font-weight:400;white-space:nowrap;">None</div>
<svg style="position:absolute;left:281px;top:1314px;" width="20" height="14" viewBox="0 0 20 14"><path d="M2 3 L10 11 L18 3" stroke="#9a9a9a" stroke-width="2.5" fill="none"/></svg>
<div style="left:69px;top:1366.3px;font-size:24px;line-height:24px;color:#8e8e8e;font-weight:400;white-space:nowrap;">10 Clips</div>
<svg style="position:absolute;left:170px;top:1244px;" width="36" height="34" viewBox="0 0 36 34"><path d="M9.5 15 L9.5 12 A8.2 8.2 0 0 1 25.9 12" fill="none" stroke="#48484c" stroke-width="3.2"/><rect x="6" y="17" width="23.5" height="13" rx="2.4" fill="#48484c"/></svg>
<svg style="position:absolute;left:332px;top:1306px;" width="50" height="30" viewBox="0 0 50 30"><g fill="none" stroke="#8a8a8a" stroke-width="2.1"><path d="M5 10 L13.5 5.8"/><circle cx="17" cy="8" r="3.6"/><path d="M19.7 8 L32.3 19"/><circle cx="35" cy="22.5" r="3.6"/><path d="M38.3 18.6 L44.8 13.8"/></g></svg>
<div style="left:414px;top:1242px;width:18px;height:187px;border:2px solid #060608;background:#28282e"></div>
<div style="left:416px;top:1265px;width:14px;height:21px;background:repeating-linear-gradient(180deg,#e81c00 0px,#e81c00 2px,#be1a00 2px,#be1a00 4px)"></div>
<div style="left:416px;top:1286px;width:14px;height:40px;background:repeating-linear-gradient(180deg,#fff654 0px,#fff654 2px,#d6cf4e 2px,#d6cf4e 4px)"></div>
<div style="left:416px;top:1326px;width:14px;height:101px;background:repeating-linear-gradient(180deg,#00e000 0px,#00e000 2px,#00a800 2px,#00a800 4px)"></div>
<div style="left:0px;top:1440px;width:8px;height:260px;background:#3f8f5f"></div>
<div style="left:8px;top:1440px;width:452px;height:260px;background:#222227"></div>
<div style="left:40px;top:1440px;width:2px;height:260px;background:#0e0e10"></div>
<div style="left:120px;top:1440px;width:2px;height:52px;background:#0e0e10"></div>
<div style="left:42px;top:1492px;width:418px;height:2px;background:#0e0e10"></div>
<div style="left:386px;top:1494px;width:2px;height:206px;background:#0e0e10"></div>
<div style="left:0px;top:1700px;width:460px;height:2px;background:#0e0e10"></div>
<div style="left:69px;top:1453.8px;font-size:24px;line-height:24px;color:#eeeeee;font-weight:400;white-space:nowrap;transform:scaleX(0.9);transform-origin:0 50%;">A3</div>
<div style="left:144px;top:1453.8px;font-size:24px;line-height:24px;color:#eeeeee;font-weight:400;white-space:nowrap;">Effects</div>
<div style="right:2431px;top:1453.8px;font-size:24px;line-height:24px;color:#8e8e8e;font-weight:400;white-space:nowrap;">2.0</div>
<div style="left:61px;top:1502px;width:86px;height:43px;border:2px solid #111113;border-radius:5px;background:#1c1c1e"></div>
<div style="left:-396px;width:1000px;text-align:center;top:1512.3px;font-size:23px;line-height:23px;color:#8e8e8e;font-weight:400;white-space:nowrap;">0.0</div>
<div style="left:226px;top:1506px;width:36px;height:36px;border-radius:7px;background:#38383c"></div>
<div style="left:-256px;width:1000px;text-align:center;top:1513.3px;font-size:22px;line-height:22px;color:#9a9a9a;font-weight:400;white-space:nowrap;">R</div>
<div style="left:282px;top:1506px;width:36px;height:36px;border-radius:7px;background:#38383c"></div>
<div style="left:-200px;width:1000px;text-align:center;top:1513.3px;font-size:22px;line-height:22px;color:#9a9a9a;font-weight:400;white-space:nowrap;">S</div>
<div style="left:338px;top:1506px;width:36px;height:36px;border-radius:7px;background:#38383c"></div>
<div style="left:-144px;width:1000px;text-align:center;top:1513.3px;font-size:22px;line-height:22px;color:#9a9a9a;font-weight:400;white-space:nowrap;">M</div>
<div style="left:61px;top:1560px;width:258px;height:47px;border:2px solid #0e0e10;border-radius:5px;background:#1e1e20"></div>
<div style="left:79px;top:1571.3px;font-size:25px;line-height:25px;color:#f0f0f0;font-weight:400;white-space:nowrap;">None</div>
<svg style="position:absolute;left:281px;top:1576px;" width="20" height="14" viewBox="0 0 20 14"><path d="M2 3 L10 11 L18 3" stroke="#9a9a9a" stroke-width="2.5" fill="none"/></svg>
<div style="left:69px;top:1628.3px;font-size:24px;line-height:24px;color:#8e8e8e;font-weight:400;white-space:nowrap;">43 Clips</div>
<svg style="position:absolute;left:170px;top:1506px;" width="36" height="34" viewBox="0 0 36 34"><path d="M9.5 15 L9.5 12 A8.2 8.2 0 0 1 25.9 12" fill="none" stroke="#48484c" stroke-width="3.2"/><rect x="6" y="17" width="23.5" height="13" rx="2.4" fill="#48484c"/></svg>
<svg style="position:absolute;left:332px;top:1568px;" width="50" height="30" viewBox="0 0 50 30"><g fill="none" stroke="#8a8a8a" stroke-width="2.1"><path d="M5 10 L13.5 5.8"/><circle cx="17" cy="8" r="3.6"/><path d="M19.7 8 L32.3 19"/><circle cx="35" cy="22.5" r="3.6"/><path d="M38.3 18.6 L44.8 13.8"/></g></svg>
<div style="left:410px;top:1504px;width:26px;height:187px;border:2px solid #060608;background:#28282e"></div>
<div style="left:422px;top:1504px;width:2px;height:187px;background:#060608"></div>
<div style="left:0px;top:1702px;width:8px;height:12px;background:#1f6f9f"></div>
<div style="left:8px;top:1702px;width:452px;height:34px;background:#222227"></div>
<div style="left:40px;top:1702px;width:2px;height:12px;background:#0e0e10"></div>
<div style="left:120px;top:1702px;width:2px;height:12px;background:#0e0e10"></div>
<div style="left:462px;top:916px;width:2398px;height:260px;background:repeating-linear-gradient(90deg,rgba(72,72,80,0.32) 0 1px,transparent 1px 12px) 1px 0/auto,repeating-conic-gradient(#151518 0 25%,#212125 0 50%) 0 0/4px 4px"></div>
<div style="left:462px;top:916px;width:40px;height:260px;background:linear-gradient(90deg,rgba(0,0,0,0.3),rgba(0,0,0,0))"></div>
<div style="left:462px;top:1045px;width:2398px;height:2px;background:rgba(10,10,12,0.45)"></div>
<div style="left:462px;top:1176px;width:2398px;height:2px;background:#0e0e10"></div>
<div style="left:462px;top:1178px;width:2398px;height:260px;background:#45925f"></div>
<div style="left:462px;top:1438px;width:2398px;height:3px;background:#141416"></div>
<div style="left:462px;top:1441px;width:2398px;height:261px;background-color:#28272e;background-image:repeating-linear-gradient(90deg,#3a3a40 0 1px,transparent 1px 12px);background-position:1px 0"></div>
<div style="left:462px;top:1702px;width:2398px;height:12px;background-color:#28272e;background-image:repeating-linear-gradient(90deg,#3a3a40 0 1px,transparent 1px 12px);background-position:1px 0"></div>
<div style="left:462px;top:1700px;width:2398px;height:2px;background:#141416"></div>
<div style="left:462px;top:1569px;width:2398px;height:2px;background:#19191c"></div>
<div style="left:462px;top:1714px;width:2418px;height:22px;background:#2f2f34"></div>
<div style="left:1341px;top:1716px;width:194px;height:17px;border:2px solid #0e0e10;border-radius:9px;background:#45454b"></div>
<div style="left:2858px;top:836px;width:22px;height:900px;background:#2f2f34"></div>
<div style="left:2860px;top:837px;width:17px;height:678px;border:1.5px solid #111113;border-radius:8px;background:#5a5d63"></div>
<svg style="position:absolute;left:462px;top:1178px;" width="2398" height="260" viewBox="0 0 2398 260">
<rect x="0" y="0" width="2398" height="260" fill="#45925f"/>
<g stroke="#3b7f53" stroke-width="1"><line x1="1.5" y1="0" x2="1.5" y2="260" /><line x1="13.5" y1="0" x2="13.5" y2="260" /><line x1="25.5" y1="0" x2="25.5" y2="260" /><line x1="37.5" y1="0" x2="37.5" y2="260" /><line x1="49.5" y1="0" x2="49.5" y2="260" /><line x1="61.5" y1="0" x2="61.5" y2="260" /><line x1="73.5" y1="0" x2="73.5" y2="260" /><line x1="85.5" y1="0" x2="85.5" y2="260" /><line x1="97.5" y1="0" x2="97.5" y2="260" /><line x1="109.5" y1="0" x2="109.5" y2="260" /><line x1="121.5" y1="0" x2="121.5" y2="260" /><line x1="133.5" y1="0" x2="133.5" y2="260" /><line x1="145.5" y1="0" x2="145.5" y2="260" /><line x1="157.5" y1="0" x2="157.5" y2="260" /><line x1="169.5" y1="0" x2="169.5" y2="260" /><line x1="181.5" y1="0" x2="181.5" y2="260" /><line x1="193.5" y1="0" x2="193.5" y2="260" /><line x1="205.5" y1="0" x2="205.5" y2="260" /><line x1="217.5" y1="0" x2="217.5" y2="260" /><line x1="229.5" y1="0" x2="229.5" y2="260" /><line x1="241.5" y1="0" x2="241.5" y2="260" /><line x1="253.5" y1="0" x2="253.5" y2="260" /><line x1="265.5" y1="0" x2="265.5" y2="260" /><line x1="277.5" y1="0" x2="277.5" y2="260" /><line x1="289.5" y1="0" x2="289.5" y2="260" /><line x1="301.5" y1="0" x2="301.5" y2="260" /><line x1="313.5" y1="0" x2="313.5" y2="260" /><line x1="325.5" y1="0" x2="325.5" y2="260" /><line x1="337.5" y1="0" x2="337.5" y2="260" /><line x1="349.5" y1="0" x2="349.5" y2="260" /><line x1="361.5" y1="0" x2="361.5" y2="260" /><line x1="373.5" y1="0" x2="373.5" y2="260" /><line x1="385.5" y1="0" x2="385.5" y2="260" /><line x1="397.5" y1="0" x2="397.5" y2="260" /><line x1="409.5" y1="0" x2="409.5" y2="260" /><line x1="421.5" y1="0" x2="421.5" y2="260" /><line x1="433.5" y1="0" x2="433.5" y2="260" /><line x1="445.5" y1="0" x2="445.5" y2="260" /><line x1="457.5" y1="0" x2="457.5" y2="260" /><line x1="469.5" y1="0" x2="469.5" y2="260" /><line x1="481.5" y1="0" x2="481.5" y2="260" /><line x1="493.5" y1="0" x2="493.5" y2="260" /><line x1="505.5" y1="0" x2="505.5" y2="260" /><line x1="517.5" y1="0" x2="517.5" y2="260" /><line x1="529.5" y1="0" x2="529.5" y2="260" /><line x1="541.5" y1="0" x2="541.5" y2="260" /><line x1="553.5" y1="0" x2="553.5" y2="260" /><line x1="565.5" y1="0" x2="565.5" y2="260" /><line x1="577.5" y1="0" x2="577.5" y2="260" /><line x1="589.5" y1="0" x2="589.5" y2="260" /><line x1="601.5" y1="0" x2="601.5" y2="260" /><line x1="613.5" y1="0" x2="613.5" y2="260" /><line x1="625.5" y1="0" x2="625.5" y2="260" /><line x1="637.5" y1="0" x2="637.5" y2="260" /><line x1="649.5" y1="0" x2="649.5" y2="260" /><line x1="661.5" y1="0" x2="661.5" y2="260" /><line x1="673.5" y1="0" x2="673.5" y2="260" /><line x1="685.5" y1="0" x2="685.5" y2="260" /><line x1="697.5" y1="0" x2="697.5" y2="260" /><line x1="709.5" y1="0" x2="709.5" y2="260" /><line x1="721.5" y1="0" x2="721.5" y2="260" /><line x1="733.5" y1="0" x2="733.5" y2="260" /><line x1="745.5" y1="0" x2="745.5" y2="260" /><line x1="757.5" y1="0" x2="757.5" y2="260" /><line x1="769.5" y1="0" x2="769.5" y2="260" /><line x1="781.5" y1="0" x2="781.5" y2="260" /><line x1="793.5" y1="0" x2="793.5" y2="260" /><line x1="805.5" y1="0" x2="805.5" y2="260" /><line x1="817.5" y1="0" x2="817.5" y2="260" /><line x1="829.5" y1="0" x2="829.5" y2="260" /><line x1="841.5" y1="0" x2="841.5" y2="260" /><line x1="853.5" y1="0" x2="853.5" y2="260" /><line x1="865.5" y1="0" x2="865.5" y2="260" /><line x1="877.5" y1="0" x2="877.5" y2="260" /><line x1="889.5" y1="0" x2="889.5" y2="260" /><line x1="901.5" y1="0" x2="901.5" y2="260" /><line x1="913.5" y1="0" x2="913.5" y2="260" /><line x1="925.5" y1="0" x2="925.5" y2="260" /><line x1="937.5" y1="0" x2="937.5" y2="260" /><line x1="949.5" y1="0" x2="949.5" y2="260" /><line x1="961.5" y1="0" x2="961.5" y2="260" /><line x1="973.5" y1="0" x2="973.5" y2="260" /><line x1="985.5" y1="0" x2="985.5" y2="260" /><line x1="997.5" y1="0" x2="997.5" y2="260" /><line x1="1009.5" y1="0" x2="1009.5" y2="260" /><line x1="1021.5" y1="0" x2="1021.5" y2="260" /><line x1="1033.5" y1="0" x2="1033.5" y2="260" /><line x1="1045.5" y1="0" x2="1045.5" y2="260" /><line x1="1057.5" y1="0" x2="1057.5" y2="260" /><line x1="1069.5" y1="0" x2="1069.5" y2="260" /><line x1="1081.5" y1="0" x2="1081.5" y2="260" /><line x1="1093.5" y1="0" x2="1093.5" y2="260" /><line x1="1105.5" y1="0" x2="1105.5" y2="260" /><line x1="1117.5" y1="0" x2="1117.5" y2="260" /><line x1="1129.5" y1="0" x2="1129.5" y2="260" /><line x1="1141.5" y1="0" x2="1141.5" y2="260" /><line x1="1153.5" y1="0" x2="1153.5" y2="260" /><line x1="1165.5" y1="0" x2="1165.5" y2="260" /><line x1="1177.5" y1="0" x2="1177.5" y2="260" /><line x1="1189.5" y1="0" x2="1189.5" y2="260" /><line x1="1201.5" y1="0" x2="1201.5" y2="260" /><line x1="1213.5" y1="0" x2="1213.5" y2="260" /><line x1="1225.5" y1="0" x2="1225.5" y2="260" /><line x1="1237.5" y1="0" x2="1237.5" y2="260" /><line x1="1249.5" y1="0" x2="1249.5" y2="260" /><line x1="1261.5" y1="0" x2="1261.5" y2="260" /><line x1="1273.5" y1="0" x2="1273.5" y2="260" /><line x1="1285.5" y1="0" x2="1285.5" y2="260" /><line x1="1297.5" y1="0" x2="1297.5" y2="260" /><line x1="1309.5" y1="0" x2="1309.5" y2="260" /><line x1="1321.5" y1="0" x2="1321.5" y2="260" /><line x1="1333.5" y1="0" x2="1333.5" y2="260" /><line x1="1345.5" y1="0" x2="1345.5" y2="260" /><line x1="1357.5" y1="0" x2="1357.5" y2="260" /><line x1="1369.5" y1="0" x2="1369.5" y2="260" /><line x1="1381.5" y1="0" x2="1381.5" y2="260" /><line x1="1393.5" y1="0" x2="1393.5" y2="260" /><line x1="1405.5" y1="0" x2="1405.5" y2="260" /><line x1="1417.5" y1="0" x2="1417.5" y2="260" /><line x1="1429.5" y1="0" x2="1429.5" y2="260" /><line x1="1441.5" y1="0" x2="1441.5" y2="260" /><line x1="1453.5" y1="0" x2="1453.5" y2="260" /><line x1="1465.5" y1="0" x2="1465.5" y2="260" /><line x1="1477.5" y1="0" x2="1477.5" y2="260" /><line x1="1489.5" y1="0" x2="1489.5" y2="260" /><line x1="1501.5" y1="0" x2="1501.5" y2="260" /><line x1="1513.5" y1="0" x2="1513.5" y2="260" /><line x1="1525.5" y1="0" x2="1525.5" y2="260" /><line x1="1537.5" y1="0" x2="1537.5" y2="260" /><line x1="1549.5" y1="0" x2="1549.5" y2="260" /><line x1="1561.5" y1="0" x2="1561.5" y2="260" /><line x1="1573.5" y1="0" x2="1573.5" y2="260" /><line x1="1585.5" y1="0" x2="1585.5" y2="260" /><line x1="1597.5" y1="0" x2="1597.5" y2="260" /><line x1="1609.5" y1="0" x2="1609.5" y2="260" /><line x1="1621.5" y1="0" x2="1621.5" y2="260" /><line x1="1633.5" y1="0" x2="1633.5" y2="260" /><line x1="1645.5" y1="0" x2="1645.5" y2="260" /><line x1="1657.5" y1="0" x2="1657.5" y2="260" /><line x1="1669.5" y1="0" x2="1669.5" y2="260" /><line x1="1681.5" y1="0" x2="1681.5" y2="260" /><line x1="1693.5" y1="0" x2="1693.5" y2="260" /><line x1="1705.5" y1="0" x2="1705.5" y2="260" /><line x1="1717.5" y1="0" x2="1717.5" y2="260" /><line x1="1729.5" y1="0" x2="1729.5" y2="260" /><line x1="1741.5" y1="0" x2="1741.5" y2="260" /><line x1="1753.5" y1="0" x2="1753.5" y2="260" /><line x1="1765.5" y1="0" x2="1765.5" y2="260" /><line x1="1777.5" y1="0" x2="1777.5" y2="260" /><line x1="1789.5" y1="0" x2="1789.5" y2="260" /><line x1="1801.5" y1="0" x2="1801.5" y2="260" /><line x1="1813.5" y1="0" x2="1813.5" y2="260" /><line x1="1825.5" y1="0" x2="1825.5" y2="260" /><line x1="1837.5" y1="0" x2="1837.5" y2="260" /><line x1="1849.5" y1="0" x2="1849.5" y2="260" /><line x1="1861.5" y1="0" x2="1861.5" y2="260" /><line x1="1873.5" y1="0" x2="1873.5" y2="260" /><line x1="1885.5" y1="0" x2="1885.5" y2="260" /><line x1="1897.5" y1="0" x2="1897.5" y2="260" /><line x1="1909.5" y1="0" x2="1909.5" y2="260" /><line x1="1921.5" y1="0" x2="1921.5" y2="260" /><line x1="1933.5" y1="0" x2="1933.5" y2="260" /><line x1="1945.5" y1="0" x2="1945.5" y2="260" /><line x1="1957.5" y1="0" x2="1957.5" y2="260" /><line x1="1969.5" y1="0" x2="1969.5" y2="260" /><line x1="1981.5" y1="0" x2="1981.5" y2="260" /><line x1="1993.5" y1="0" x2="1993.5" y2="260" /><line x1="2005.5" y1="0" x2="2005.5" y2="260" /><line x1="2017.5" y1="0" x2="2017.5" y2="260" /><line x1="2029.5" y1="0" x2="2029.5" y2="260" /><line x1="2041.5" y1="0" x2="2041.5" y2="260" /><line x1="2053.5" y1="0" x2="2053.5" y2="260" /><line x1="2065.5" y1="0" x2="2065.5" y2="260" /><line x1="2077.5" y1="0" x2="2077.5" y2="260" /><line x1="2089.5" y1="0" x2="2089.5" y2="260" /><line x1="2101.5" y1="0" x2="2101.5" y2="260" /><line x1="2113.5" y1="0" x2="2113.5" y2="260" /><line x1="2125.5" y1="0" x2="2125.5" y2="260" /><line x1="2137.5" y1="0" x2="2137.5" y2="260" /><line x1="2149.5" y1="0" x2="2149.5" y2="260" /><line x1="2161.5" y1="0" x2="2161.5" y2="260" /><line x1="2173.5" y1="0" x2="2173.5" y2="260" /><line x1="2185.5" y1="0" x2="2185.5" y2="260" /><line x1="2197.5" y1="0" x2="2197.5" y2="260" /><line x1="2209.5" y1="0" x2="2209.5" y2="260" /><line x1="2221.5" y1="0" x2="2221.5" y2="260" /><line x1="2233.5" y1="0" x2="2233.5" y2="260" /><line x1="2245.5" y1="0" x2="2245.5" y2="260" /><line x1="2257.5" y1="0" x2="2257.5" y2="260" /><line x1="2269.5" y1="0" x2="2269.5" y2="260" /><line x1="2281.5" y1="0" x2="2281.5" y2="260" /><line x1="2293.5" y1="0" x2="2293.5" y2="260" /><line x1="2305.5" y1="0" x2="2305.5" y2="260" /><line x1="2317.5" y1="0" x2="2317.5" y2="260" /><line x1="2329.5" y1="0" x2="2329.5" y2="260" /><line x1="2341.5" y1="0" x2="2341.5" y2="260" /><line x1="2353.5" y1="0" x2="2353.5" y2="260" /><line x1="2365.5" y1="0" x2="2365.5" y2="260" /><line x1="2377.5" y1="0" x2="2377.5" y2="260" /><line x1="2389.5" y1="0" x2="2389.5" y2="260" /></g>
<line x1="0" y1="107" x2="2398" y2="107" stroke="#3a6a4a" stroke-width="1.6"/>
<line x1="0" y1="213.5" x2="2398" y2="213.5" stroke="#33603f" stroke-width="1.4"/>
<path d="M43.0 107 L43.0 107.0 L45.5 96.6 L48.0 85.6 L50.4 14.0 L52.9 47.0 L55.4 83.8 L57.9 78.8 L60.4 73.9 L62.9 74.4 L65.3 76.0 L67.8 19.5 L70.3 81.6 L72.8 85.0 L75.3 79.8 L77.7 74.2 L80.2 95.7 L82.7 24.1 L85.2 101.9 L87.7 81.6 L90.1 42.7 L92.6 80.5 L95.1 85.0 L97.6 87.9 L100.1 88.2 L102.6 91.9 L105.0 94.3 L107.5 98.6 L110.0 107.0 L110.0 107 L110.0 107.0 L107.5 124.0 L105.0 132.3 L102.6 135.7 L100.1 139.2 L97.6 136.9 L95.1 136.9 L92.6 203.5 L90.1 140.5 L87.7 144.0 L85.2 150.0 L82.7 161.8 L80.2 169.9 L77.7 153.9 L75.3 138.2 L72.8 154.9 L70.3 171.7 L67.8 165.4 L65.3 154.3 L62.9 152.5 L60.4 116.1 L57.9 161.6 L55.4 169.2 L52.9 187.0 L50.4 211.0 L48.0 138.3 L45.5 122.6 L43.0 107.0 Z M110.0 107 L110.0 107.0 L112.5 77.6 L115.0 90.2 L117.5 85.1 L120.0 85.0 L122.5 56.8 L125.0 89.9 L127.5 97.3 L130.0 107.0 L130.0 107 L130.0 107.0 L127.5 121.9 L125.0 146.7 L122.5 163.5 L120.0 136.0 L117.5 139.9 L115.0 135.6 L112.5 125.6 L110.0 107.0 Z M130.0 107 L130.0 107.0 L132.5 98.7 L134.9 93.7 L137.4 90.3 L139.9 84.3 L142.4 82.0 L144.8 79.7 L147.3 96.1 L149.8 78.9 L152.2 78.7 L154.7 79.0 L157.2 79.6 L159.6 80.1 L162.1 96.2 L164.6 89.2 L167.1 95.5 L169.5 99.8 L172.0 107.0 L172.0 107 L172.0 107.0 L169.5 111.2 L167.1 126.0 L164.6 134.6 L162.1 116.4 L159.6 117.0 L157.2 140.4 L154.7 166.4 L152.2 138.2 L149.8 138.7 L147.3 139.3 L144.8 141.7 L142.4 144.8 L139.9 147.0 L137.4 139.6 L134.9 129.1 L132.5 111.9 L130.0 107.0 Z M172.0 107 L172.0 107.0 L174.4 105.4 L176.9 93.7 L179.3 54.6 L181.8 95.2 L184.2 76.2 L186.7 74.5 L189.1 74.0 L191.6 73.3 L194.0 72.6 L196.4 71.4 L198.9 91.3 L201.3 68.8 L203.8 70.2 L206.2 73.4 L208.7 82.3 L211.1 90.7 L213.6 98.5 L216.0 107.0 L216.0 107 L216.0 107.0 L213.6 125.3 L211.1 140.6 L208.7 155.4 L206.2 184.6 L203.8 175.3 L201.3 148.5 L198.9 146.8 L196.4 145.1 L194.0 116.4 L191.6 147.9 L189.1 151.6 L186.7 155.3 L184.2 153.6 L181.8 151.1 L179.3 117.4 L176.9 128.8 L174.4 118.1 L172.0 107.0 Z M216.0 107 L216.0 107.0 L218.4 99.9 L220.8 96.5 L223.2 100.9 L225.6 89.7 L228.0 103.1 L230.4 83.9 L232.8 82.1 L235.2 83.9 L237.6 53.5 L240.0 48.4 L242.4 84.0 L244.8 82.1 L247.2 80.5 L249.6 79.5 L252.0 78.6 L254.4 80.1 L256.8 98.8 L259.2 86.7 L261.6 85.3 L264.0 83.1 L266.4 83.8 L268.8 65.6 L271.2 93.2 L273.6 105.4 L276.0 107.0 L276.0 107 L276.0 107.0 L273.6 121.5 L271.2 132.5 L268.8 141.9 L266.4 149.3 L264.0 145.3 L261.6 180.4 L259.2 173.8 L256.8 134.4 L254.4 131.9 L252.0 119.2 L249.6 144.7 L247.2 176.2 L244.8 114.7 L242.4 181.6 L240.0 146.6 L237.6 144.5 L235.2 142.4 L232.8 144.0 L230.4 146.1 L228.0 147.5 L225.6 142.8 L223.2 132.6 L220.8 125.2 L218.4 117.9 L216.0 107.0 Z M276.0 107 L276.0 107.0 L278.5 101.5 L280.9 97.9 L283.4 93.4 L285.8 99.7 L288.3 87.3 L290.7 85.9 L293.2 60.9 L295.6 88.8 L298.1 92.7 L300.5 97.0 L303.0 107.0 L303.0 107 L303.0 107.0 L300.5 115.7 L298.1 123.4 L295.6 131.5 L293.2 133.9 L290.7 130.9 L288.3 129.8 L285.8 133.1 L283.4 131.0 L280.9 124.1 L278.5 116.1 L276.0 107.0 Z M303.0 107 L303.0 107.0 L305.4 99.0 L307.9 92.2 L310.3 72.0 L312.7 92.3 L315.1 95.2 L317.6 99.3 L320.0 107.0 L320.0 107 L320.0 107.0 L317.6 118.8 L315.1 129.9 L312.7 146.5 L310.3 141.3 L307.9 138.1 L305.4 124.8 L303.0 107.0 Z M320.0 107 L320.0 107.0 L322.5 98.6 L324.9 94.2 L327.4 58.3 L329.8 88.3 L332.3 88.6 L334.8 88.4 L337.2 84.8 L339.7 81.2 L342.2 79.7 L344.6 84.4 L347.1 89.2 L349.5 58.7 L352.0 87.3 L354.5 83.8 L356.9 82.1 L359.4 82.4 L361.8 82.6 L364.3 84.7 L366.8 88.2 L369.2 91.7 L371.7 43.0 L374.2 101.8 L376.6 84.7 L379.1 89.9 L381.5 97.2 L384.0 107.0 L384.0 107 L384.0 107.0 L381.5 109.7 L379.1 130.1 L376.6 113.3 L374.2 142.5 L371.7 144.8 L369.2 124.1 L366.8 147.1 L364.3 146.4 L361.8 145.7 L359.4 145.4 L356.9 145.4 L354.5 157.3 L352.0 142.4 L349.5 139.3 L347.1 136.8 L344.6 136.8 L342.2 136.8 L339.7 115.5 L337.2 132.4 L334.8 162.7 L332.3 175.1 L329.8 137.6 L327.4 136.4 L324.9 128.9 L322.5 119.4 L320.0 107.0 Z M384.0 107 L384.0 107.0 L386.5 104.6 L389.0 93.2 L391.5 59.2 L394.0 82.8 L396.5 78.5 L399.0 74.4 L401.5 94.8 L404.0 78.4 L406.5 80.9 L409.0 56.8 L411.5 86.8 L414.0 90.0 L416.5 94.7 L419.0 98.5 L421.5 102.3 L424.0 107.0 L424.0 107 L424.0 107.0 L421.5 109.9 L419.0 125.4 L416.5 126.3 L414.0 175.2 L411.5 146.7 L409.0 153.7 L406.5 146.9 L404.0 121.4 L401.5 137.8 L399.0 137.8 L396.5 138.3 L394.0 113.6 L391.5 128.6 L389.0 122.8 L386.5 116.8 L384.0 107.0 Z M436.0 107 L436.0 107.0 L438.5 100.4 L441.0 96.4 L443.5 49.3 L446.0 89.7 L448.5 89.7 L451.0 89.4 L453.5 88.7 L456.0 87.9 L458.5 82.0 L461.0 75.9 L463.5 79.6 L466.0 66.0 L468.5 97.5 L471.0 107.0 L471.0 107 L471.0 107.0 L468.5 116.2 L466.0 122.0 L463.5 128.2 L461.0 134.2 L458.5 159.9 L456.0 117.6 L453.5 132.1 L451.0 131.7 L448.5 134.4 L446.0 137.2 L443.5 133.4 L441.0 128.9 L438.5 121.2 L436.0 107.0 Z M479.0 107 L479.0 107.0 L481.4 100.6 L483.8 103.5 L486.2 86.9 L488.6 56.5 L491.0 76.1 L493.4 98.5 L495.8 101.3 L498.2 72.9 L500.6 74.3 L503.0 75.7 L505.4 77.1 L507.8 99.3 L510.2 76.4 L512.6 78.8 L515.0 82.2 L517.4 83.9 L519.8 43.2 L522.2 84.8 L524.6 58.6 L527.0 93.1 L529.4 86.9 L531.8 80.8 L534.2 83.3 L536.6 40.3 L539.0 86.4 L541.4 80.8 L543.8 99.3 L546.2 79.7 L548.6 97.0 L551.0 83.9 L553.4 86.4 L555.8 87.7 L558.2 88.9 L560.6 44.9 L563.0 86.5 L565.4 83.6 L567.8 94.9 L570.2 77.5 L572.6 77.4 L575.0 77.7 L577.4 83.7 L579.8 89.4 L582.2 91.0 L584.6 91.7 L587.0 89.8 L589.4 85.6 L591.8 82.3 L594.2 81.1 L596.6 80.2 L599.0 81.4 L601.4 83.4 L603.8 89.1 L606.2 94.7 L608.6 99.0 L611.0 107.0 L611.0 107 L611.0 107.0 L608.6 120.8 L606.2 111.6 L603.8 143.3 L601.4 120.7 L599.0 150.5 L596.6 140.9 L594.2 134.9 L591.8 140.7 L589.4 144.9 L587.0 141.0 L584.6 138.3 L582.2 137.9 L579.8 137.3 L577.4 133.9 L575.0 130.1 L572.6 132.1 L570.2 135.4 L567.8 144.5 L565.4 155.4 L563.0 156.6 L560.6 150.9 L558.2 145.1 L555.8 138.5 L553.4 135.7 L551.0 137.2 L548.6 139.1 L546.2 141.5 L543.8 115.0 L541.4 140.5 L539.0 111.8 L536.6 131.8 L534.2 126.4 L531.8 130.0 L529.4 115.9 L527.0 138.5 L524.6 120.6 L522.2 156.7 L519.8 151.4 L517.4 146.1 L515.0 113.3 L512.6 168.2 L510.2 135.4 L507.8 138.0 L505.4 113.6 L503.0 163.1 L500.6 155.2 L498.2 156.7 L495.8 152.2 L493.4 115.9 L491.0 153.8 L488.6 177.0 L486.2 113.0 L483.8 125.4 L481.4 116.6 L479.0 107.0 Z M624.0 107 L624.0 107.0 L626.4 102.2 L628.8 105.4 L631.2 95.5 L633.7 62.3 L636.1 85.3 L638.5 77.6 L640.9 55.8 L643.3 98.4 L645.8 82.0 L648.2 79.5 L650.6 80.2 L653.0 85.2 L655.4 103.3 L657.8 100.1 L660.2 96.1 L662.7 84.7 L665.1 88.0 L667.5 89.6 L669.9 91.1 L672.3 87.5 L674.8 83.4 L677.2 81.6 L679.6 80.3 L682.0 84.3 L684.4 90.3 L686.8 90.3 L689.2 85.4 L691.7 82.1 L694.1 80.9 L696.5 81.1 L698.9 85.0 L701.3 88.9 L703.8 92.1 L706.2 96.1 L708.6 101.6 L711.0 107.0 L711.0 107 L711.0 107.0 L708.6 117.2 L706.2 124.6 L703.8 130.9 L701.3 135.5 L698.9 163.3 L696.5 130.6 L694.1 129.4 L691.7 128.1 L689.2 132.0 L686.8 136.2 L684.4 168.3 L682.0 162.0 L679.6 140.9 L677.2 134.9 L674.8 129.0 L672.3 129.3 L669.9 130.4 L667.5 130.1 L665.1 129.0 L662.7 129.5 L660.2 134.8 L657.8 112.5 L655.4 137.3 L653.0 133.9 L650.6 111.4 L648.2 127.9 L645.8 126.4 L643.3 128.9 L640.9 131.4 L638.5 136.9 L636.1 141.0 L633.7 120.2 L631.2 132.2 L628.8 123.8 L626.4 115.2 L624.0 107.0 Z M790.0 107 L790.0 107.0 L792.4 94.8 L794.8 29.0 L797.2 82.4 L799.6 83.1 L802.0 80.8 L804.4 74.1 L806.8 73.6 L809.2 81.2 L811.6 39.0 L814.0 77.4 L816.4 68.8 L818.8 67.1 L821.2 65.5 L823.6 96.3 L826.0 69.6 L828.4 98.7 L830.8 85.9 L833.2 92.0 L835.6 85.4 L838.0 107.0 L838.0 107 L838.0 107.0 L835.6 129.4 L833.2 139.7 L830.8 143.0 L828.4 147.7 L826.0 156.0 L823.6 162.5 L821.2 167.9 L818.8 165.3 L816.4 162.7 L814.0 160.2 L811.6 160.9 L809.2 165.8 L806.8 129.6 L804.4 181.9 L802.0 174.1 L799.6 120.9 L797.2 157.4 L794.8 195.0 L792.4 122.7 L790.0 107.0 Z M838.0 107 L838.0 107.0 L840.5 97.3 L843.0 35.0 L845.5 87.5 L848.0 84.9 L850.5 87.4 L853.0 88.0 L855.5 87.4 L858.0 102.5 L860.5 100.5 L863.0 84.9 L865.5 21.7 L868.0 78.5 L870.5 80.7 L873.0 87.3 L875.5 96.5 L878.0 107.0 L878.0 107 L878.0 107.0 L875.5 118.9 L873.0 125.2 L870.5 128.7 L868.0 134.6 L865.5 134.9 L863.0 194.6 L860.5 182.2 L858.0 157.7 L855.5 153.8 L853.0 147.0 L850.5 190.2 L848.0 139.3 L845.5 131.1 L843.0 127.4 L840.5 110.3 L838.0 107.0 Z M878.0 107 L878.0 107.0 L880.5 96.6 L883.0 88.9 L885.5 82.0 L888.0 100.3 L890.5 84.7 L893.0 89.7 L895.5 84.7 L898.0 95.3 L900.5 71.8 L903.0 71.3 L905.5 72.2 L908.0 73.2 L910.5 66.2 L913.0 90.0 L915.5 98.0 L918.0 107.0 L918.0 107 L918.0 107.0 L915.5 125.6 L913.0 113.8 L910.5 113.0 L908.0 151.4 L905.5 146.2 L903.0 141.3 L900.5 137.6 L898.0 133.8 L895.5 133.7 L893.0 116.8 L890.5 137.5 L888.0 135.5 L885.5 128.1 L883.0 143.2 L880.5 108.9 L878.0 107.0 Z M918.0 107 L918.0 107.0 L920.4 99.5 L922.9 96.0 L925.3 94.3 L927.7 102.7 L930.2 81.7 L932.6 77.8 L935.1 78.8 L937.5 79.8 L939.9 80.0 L942.4 77.0 L944.8 74.2 L947.2 72.9 L949.7 73.8 L952.1 74.8 L954.5 75.5 L957.0 76.0 L959.4 76.5 L961.9 79.5 L964.3 85.1 L966.7 90.5 L969.2 89.4 L971.6 84.6 L974.0 79.8 L976.5 78.4 L978.9 78.4 L981.3 78.2 L983.8 77.7 L986.2 77.2 L988.7 76.7 L991.1 81.1 L993.5 103.2 L996.0 102.9 L998.4 101.0 L1000.8 89.9 L1003.3 88.9 L1005.7 89.1 L1008.1 39.6 L1010.6 89.5 L1013.0 89.6 L1015.5 89.8 L1017.9 88.2 L1020.3 98.7 L1022.8 74.0 L1025.2 69.4 L1027.6 69.4 L1030.1 69.3 L1032.5 69.9 L1034.9 71.1 L1037.4 72.3 L1039.8 71.9 L1042.3 70.7 L1044.7 77.3 L1047.1 86.5 L1049.6 96.2 L1052.0 107.0 L1052.0 107 L1052.0 107.0 L1049.6 118.9 L1047.1 131.2 L1044.7 143.9 L1042.3 156.6 L1039.8 155.6 L1037.4 149.9 L1034.9 145.6 L1032.5 151.6 L1030.1 157.4 L1027.6 155.3 L1025.2 150.0 L1022.8 146.2 L1020.3 145.1 L1017.9 143.9 L1015.5 138.4 L1013.0 132.7 L1010.6 133.4 L1008.1 139.9 L1005.7 145.7 L1003.3 147.4 L1000.8 149.2 L998.4 146.9 L996.0 142.6 L993.5 140.9 L991.1 145.6 L988.7 150.2 L986.2 144.3 L983.8 137.1 L981.3 133.4 L978.9 134.0 L976.5 135.0 L974.0 138.9 L971.6 143.0 L969.2 141.5 L966.7 137.1 L964.3 133.6 L961.9 133.6 L959.4 133.6 L957.0 132.1 L954.5 130.0 L952.1 131.3 L949.7 116.1 L947.2 164.8 L944.8 142.7 L942.4 142.2 L939.9 141.6 L937.5 139.8 L935.1 139.2 L932.6 145.7 L930.2 151.7 L927.7 144.0 L925.3 129.2 L922.9 119.9 L920.4 114.2 L918.0 107.0 Z M1112.0 107 L1112.0 107.0 L1114.7 96.6 L1117.3 91.0 L1120.0 91.5 L1122.7 91.6 L1125.3 105.5 L1128.0 107.0 L1128.0 107 L1128.0 107.0 L1125.3 124.4 L1122.7 135.7 L1120.0 131.3 L1117.3 110.7 L1114.7 118.6 L1112.0 107.0 Z M1128.0 107 L1128.0 107.0 L1130.4 99.7 L1132.9 94.4 L1135.3 87.8 L1137.7 59.1 L1140.1 82.4 L1142.6 85.8 L1145.0 87.3 L1147.4 88.3 L1149.9 40.6 L1152.3 88.9 L1154.7 85.8 L1157.1 39.3 L1159.6 77.0 L1162.0 74.8 L1164.4 75.3 L1166.9 79.0 L1169.3 83.1 L1171.7 90.7 L1174.1 95.5 L1176.6 98.8 L1179.0 107.0 L1179.0 107 L1179.0 107.0 L1176.6 118.2 L1174.1 124.9 L1171.7 134.4 L1169.3 149.8 L1166.9 125.2 L1164.4 144.2 L1162.0 134.7 L1159.6 137.5 L1157.1 173.0 L1154.7 141.7 L1152.3 140.2 L1149.9 139.6 L1147.4 121.0 L1145.0 143.6 L1142.6 146.0 L1140.1 148.4 L1137.7 148.3 L1135.3 139.7 L1132.9 129.3 L1130.4 117.3 L1128.0 107.0 Z M1225.0 107 L1225.0 107.0 L1227.4 102.9 L1229.8 92.0 L1232.2 86.4 L1234.7 76.7 L1237.1 71.3 L1239.5 70.2 L1241.9 72.3 L1244.3 74.5 L1246.8 76.6 L1249.2 79.3 L1251.6 81.8 L1254.0 82.1 L1256.4 97.5 L1258.8 82.9 L1261.2 83.8 L1263.7 84.7 L1266.1 28.0 L1268.5 79.6 L1270.9 26.8 L1273.3 81.7 L1275.8 90.4 L1278.2 96.6 L1280.6 100.1 L1283.0 107.0 L1283.0 107 L1283.0 107.0 L1280.6 118.4 L1278.2 129.0 L1275.8 119.3 L1273.3 159.2 L1270.9 159.3 L1268.5 175.0 L1266.1 156.1 L1263.7 154.4 L1261.2 152.8 L1258.8 151.3 L1256.4 153.5 L1254.0 159.6 L1251.6 160.9 L1249.2 147.3 L1246.8 133.6 L1244.3 146.5 L1241.9 159.0 L1239.5 157.4 L1237.1 151.4 L1234.7 146.6 L1232.2 169.7 L1229.8 128.0 L1227.4 118.7 L1225.0 107.0 Z M1283.0 107 L1283.0 107.0 L1285.5 105.7 L1288.0 90.8 L1290.5 100.1 L1293.0 81.6 L1295.5 86.1 L1298.0 38.7 L1300.5 99.0 L1303.0 86.3 L1305.5 86.7 L1308.0 88.3 L1310.5 89.9 L1313.0 86.0 L1315.5 80.9 L1318.0 76.1 L1320.5 103.2 L1323.0 65.4 L1325.5 84.0 L1328.0 107.0 L1328.0 107 L1328.0 107.0 L1325.5 117.3 L1323.0 124.7 L1320.5 131.1 L1318.0 114.1 L1315.5 140.6 L1313.0 142.2 L1310.5 141.5 L1308.0 185.3 L1305.5 140.6 L1303.0 183.7 L1300.5 140.1 L1298.0 165.9 L1295.5 146.4 L1293.0 148.3 L1290.5 116.4 L1288.0 132.1 L1285.5 121.2 L1283.0 107.0 Z M1328.0 107 L1328.0 107.0 L1330.4 99.7 L1332.8 92.7 L1335.2 85.5 L1337.6 78.2 L1340.0 75.6 L1342.4 34.7 L1344.8 77.5 L1347.2 79.0 L1349.6 77.3 L1352.0 101.5 L1354.4 75.4 L1356.8 80.4 L1359.2 99.8 L1361.6 84.6 L1364.0 79.4 L1366.4 74.4 L1368.8 77.1 L1371.2 80.9 L1373.6 83.4 L1376.0 81.0 L1378.4 79.5 L1380.8 84.2 L1383.2 90.5 L1385.6 97.5 L1388.0 107.0 L1388.0 107 L1388.0 107.0 L1385.6 118.5 L1383.2 125.6 L1380.8 137.2 L1378.4 150.6 L1376.0 153.9 L1373.6 152.2 L1371.2 150.6 L1368.8 154.2 L1366.4 158.2 L1364.0 156.4 L1361.6 145.5 L1359.2 134.4 L1356.8 135.1 L1354.4 138.5 L1352.0 142.1 L1349.6 146.2 L1347.2 150.2 L1344.8 153.8 L1342.4 157.3 L1340.0 160.6 L1337.6 161.5 L1335.2 155.5 L1332.8 140.0 L1330.4 125.4 L1328.0 107.0 Z M1388.0 107 L1388.0 107.0 L1390.5 105.3 L1393.0 98.6 L1395.4 93.9 L1397.9 100.8 L1400.4 77.2 L1402.9 100.9 L1405.4 83.1 L1407.8 99.1 L1410.3 89.2 L1412.8 91.0 L1415.3 90.6 L1417.8 102.2 L1420.2 83.1 L1422.7 80.5 L1425.2 78.5 L1427.7 77.2 L1430.2 81.3 L1432.6 85.6 L1435.1 85.7 L1437.6 81.5 L1440.1 77.4 L1442.6 84.2 L1445.0 101.8 L1447.5 98.4 L1450.0 107.0 L1450.0 107 L1450.0 107.0 L1447.5 120.0 L1445.0 136.0 L1442.6 150.6 L1440.1 158.6 L1437.6 127.2 L1435.1 185.0 L1432.6 179.1 L1430.2 155.0 L1427.7 152.8 L1425.2 144.1 L1422.7 139.3 L1420.2 142.7 L1417.8 144.0 L1415.3 137.5 L1412.8 111.4 L1410.3 137.1 L1407.8 112.5 L1405.4 139.3 L1402.9 112.2 L1400.4 144.2 L1397.9 148.9 L1395.4 141.8 L1393.0 112.9 L1390.5 127.7 L1388.0 107.0 Z M1465.0 107 L1465.0 107.0 L1467.5 104.1 L1470.1 41.0 L1472.6 88.9 L1475.2 86.0 L1477.7 98.5 L1480.3 83.7 L1482.8 44.4 L1485.4 95.6 L1487.9 86.5 L1490.5 95.9 L1493.0 107.0 L1493.0 107 L1493.0 107.0 L1490.5 121.3 L1487.9 160.0 L1485.4 166.9 L1482.8 140.3 L1480.3 138.7 L1477.7 113.1 L1475.2 143.4 L1472.6 138.6 L1470.1 128.5 L1467.5 135.6 L1465.0 107.0 Z M1502.0 107 L1502.0 107.0 L1504.4 97.8 L1506.8 93.7 L1509.2 89.6 L1511.6 84.6 L1514.0 81.6 L1516.4 75.0 L1518.8 68.4 L1521.2 69.3 L1523.6 70.6 L1526.0 30.2 L1528.4 80.6 L1530.8 85.4 L1533.2 53.2 L1535.6 88.6 L1538.0 89.2 L1540.4 89.6 L1542.8 42.1 L1545.2 83.6 L1547.6 80.7 L1550.0 82.4 L1552.4 84.5 L1554.8 89.4 L1557.2 94.7 L1559.6 100.0 L1562.0 107.0 L1562.0 107 L1562.0 107.0 L1559.6 118.1 L1557.2 121.0 L1554.8 128.2 L1552.4 138.3 L1550.0 165.9 L1547.6 145.0 L1545.2 143.0 L1542.8 141.3 L1540.4 145.8 L1538.0 165.1 L1535.6 152.7 L1533.2 114.9 L1530.8 138.5 L1528.4 134.9 L1526.0 137.1 L1523.6 139.4 L1521.2 143.5 L1518.8 149.2 L1516.4 154.2 L1514.0 157.7 L1511.6 175.4 L1509.2 150.5 L1506.8 138.1 L1504.4 124.4 L1502.0 107.0 Z M1583.0 107 L1583.0 107.0 L1585.4 99.0 L1587.8 90.3 L1590.2 79.9 L1592.6 99.1 L1595.1 69.8 L1597.5 97.8 L1599.9 73.9 L1602.3 78.9 L1604.7 83.7 L1607.1 84.3 L1609.5 84.9 L1611.9 85.5 L1614.3 82.7 L1616.7 79.8 L1619.2 76.9 L1621.6 78.6 L1624.0 80.4 L1626.4 82.2 L1628.8 81.8 L1631.2 81.3 L1633.6 81.0 L1636.0 75.3 L1638.4 33.1 L1640.8 62.4 L1643.3 63.8 L1645.7 91.2 L1648.1 67.5 L1650.5 71.7 L1652.9 75.8 L1655.3 79.9 L1657.7 101.8 L1660.1 81.3 L1662.5 82.0 L1664.9 81.0 L1667.4 80.7 L1669.8 85.3 L1672.2 91.0 L1674.6 97.7 L1677.0 107.0 L1677.0 107 L1677.0 107.0 L1674.6 109.6 L1672.2 130.7 L1669.8 139.6 L1667.4 150.7 L1664.9 154.6 L1662.5 157.3 L1660.1 154.7 L1657.7 151.9 L1655.3 149.3 L1652.9 147.7 L1650.5 173.8 L1648.1 188.2 L1645.7 146.7 L1643.3 155.1 L1640.8 163.2 L1638.4 167.9 L1636.0 165.3 L1633.6 162.7 L1631.2 160.0 L1628.8 154.1 L1626.4 147.9 L1624.0 143.8 L1621.6 139.6 L1619.2 135.4 L1616.7 131.3 L1614.3 129.1 L1611.9 135.5 L1609.5 143.4 L1607.1 151.7 L1604.7 153.8 L1602.3 121.6 L1599.9 156.3 L1597.5 158.2 L1595.1 158.9 L1592.6 158.1 L1590.2 147.7 L1587.8 135.7 L1585.4 130.8 L1583.0 107.0 Z M1681.0 107 L1681.0 107.0 L1683.7 89.9 L1686.3 77.5 L1689.0 75.3 L1691.7 71.9 L1694.3 84.1 L1697.0 107.0 L1697.0 107 L1697.0 107.0 L1694.3 133.4 L1691.7 156.2 L1689.0 161.5 L1686.3 160.7 L1683.7 136.6 L1681.0 107.0 Z M1701.0 107 L1701.0 107.0 L1703.5 98.8 L1706.1 95.6 L1708.6 87.9 L1711.1 98.9 L1713.6 77.0 L1716.2 76.7 L1718.7 75.6 L1721.2 97.3 L1723.8 79.7 L1726.3 86.9 L1728.8 101.9 L1731.4 87.0 L1733.9 84.2 L1736.4 85.1 L1738.9 91.3 L1741.5 100.5 L1744.0 107.0 L1744.0 107 L1744.0 107.0 L1741.5 110.9 L1738.9 126.3 L1736.4 132.8 L1733.9 140.0 L1731.4 145.2 L1728.8 150.6 L1726.3 150.4 L1723.8 146.3 L1721.2 142.0 L1718.7 144.5 L1716.2 146.7 L1713.6 117.5 L1711.1 149.4 L1708.6 141.7 L1706.1 130.5 L1703.5 118.9 L1701.0 107.0 Z M1825.0 107 L1825.0 107.0 L1827.6 92.7 L1830.1 14.0 L1832.7 70.7 L1835.3 76.5 L1837.9 86.1 L1840.4 96.8 L1843.0 107.0 L1843.0 107 L1843.0 107.0 L1840.4 125.1 L1837.9 177.0 L1835.3 153.6 L1832.7 158.7 L1830.1 169.0 L1827.6 130.5 L1825.0 107.0 Z M1843.0 107 L1843.0 107.0 L1845.4 96.2 L1847.8 86.4 L1850.2 44.2 L1852.7 72.2 L1855.1 27.0 L1857.5 78.9 L1859.9 81.0 L1862.3 82.1 L1864.7 83.3 L1867.1 82.3 L1869.6 81.0 L1872.0 79.7 L1874.4 80.5 L1876.8 96.2 L1879.2 84.3 L1881.6 79.0 L1884.0 72.9 L1886.5 67.2 L1888.9 69.5 L1891.3 73.3 L1893.7 76.3 L1896.1 78.4 L1898.5 80.3 L1901.0 82.2 L1903.4 82.1 L1905.8 81.4 L1908.2 80.8 L1910.6 80.8 L1913.0 81.0 L1915.4 81.2 L1917.9 82.9 L1920.3 85.2 L1922.7 87.6 L1925.1 83.6 L1927.5 77.1 L1929.9 70.7 L1932.3 33.5 L1934.8 80.9 L1937.2 89.7 L1939.6 96.8 L1942.0 107.0 L1942.0 107 L1942.0 107.0 L1939.6 120.6 L1937.2 133.0 L1934.8 140.1 L1932.3 144.9 L1929.9 143.6 L1927.5 142.0 L1925.1 119.8 L1922.7 149.5 L1920.3 158.3 L1917.9 179.1 L1915.4 154.4 L1913.0 148.1 L1910.6 151.0 L1908.2 156.5 L1905.8 160.7 L1903.4 156.5 L1901.0 152.2 L1898.5 148.3 L1896.1 144.7 L1893.7 141.1 L1891.3 147.7 L1888.9 155.9 L1886.5 162.6 L1884.0 165.5 L1881.6 168.5 L1879.2 189.0 L1876.8 189.0 L1874.4 149.5 L1872.0 157.1 L1869.6 164.4 L1867.1 168.2 L1864.7 168.3 L1862.3 168.4 L1859.9 156.9 L1857.5 190.8 L1855.1 136.6 L1852.7 139.4 L1850.2 135.7 L1847.8 130.8 L1845.4 122.8 L1843.0 107.0 Z M1942.0 107 L1942.0 107.0 L1944.4 95.9 L1946.8 61.5 L1949.2 72.2 L1951.6 70.2 L1954.0 72.0 L1956.4 72.7 L1958.8 77.3 L1961.2 89.9 L1963.6 99.7 L1966.0 107.0 L1966.0 107 L1966.0 107.0 L1963.6 119.8 L1961.2 126.5 L1958.8 130.2 L1956.4 118.3 L1954.0 142.7 L1951.6 169.5 L1949.2 178.3 L1946.8 130.2 L1944.4 119.9 L1942.0 107.0 Z M1968.0 107 L1968.0 107.0 L1970.5 93.4 L1973.0 70.7 L1975.5 78.5 L1978.0 71.5 L1980.5 72.0 L1983.0 72.1 L1985.5 72.2 L1988.0 73.4 L1990.5 81.3 L1993.0 89.2 L1995.5 97.2 L1998.0 107.0 L1998.0 107 L1998.0 107.0 L1995.5 120.6 L1993.0 133.0 L1990.5 134.5 L1988.0 137.1 L1985.5 118.1 L1983.0 160.7 L1980.5 155.2 L1978.0 150.1 L1975.5 141.0 L1973.0 131.6 L1970.5 123.1 L1968.0 107.0 Z M1998.0 107 L1998.0 107.0 L2000.5 105.5 L2003.0 91.6 L2005.5 84.4 L2008.0 40.0 L2010.5 100.4 L2013.0 80.7 L2015.5 33.8 L2018.0 88.4 L2020.5 86.8 L2023.0 98.2 L2025.5 86.5 L2028.0 91.0 L2030.5 97.5 L2033.0 107.0 L2033.0 107 L2033.0 107.0 L2030.5 121.8 L2028.0 132.6 L2025.5 138.5 L2023.0 141.7 L2020.5 136.4 L2018.0 133.8 L2015.5 136.7 L2013.0 139.0 L2010.5 142.5 L2008.0 119.7 L2005.5 131.7 L2003.0 121.4 L2000.5 115.7 L1998.0 107.0 Z M2033.0 107 L2033.0 107.0 L2035.5 105.2 L2038.0 91.7 L2040.5 89.5 L2043.0 89.5 L2045.5 91.0 L2048.0 87.3 L2050.5 85.8 L2053.0 89.9 L2055.5 96.6 L2058.0 107.0 L2058.0 107 L2058.0 107.0 L2055.5 109.6 L2053.0 129.8 L2050.5 137.3 L2048.0 141.2 L2045.5 145.6 L2043.0 151.6 L2040.5 178.0 L2038.0 140.8 L2035.5 126.8 L2033.0 107.0 Z M2058.0 107 L2058.0 107.0 L2060.4 99.2 L2062.8 94.4 L2065.3 90.8 L2067.7 87.8 L2070.1 88.6 L2072.5 88.5 L2075.0 86.3 L2077.4 84.1 L2079.8 82.4 L2082.2 81.0 L2084.7 79.5 L2087.1 74.8 L2089.5 70.7 L2091.9 67.7 L2094.4 92.3 L2096.8 69.5 L2099.2 48.5 L2101.6 53.5 L2104.1 71.3 L2106.5 70.6 L2108.9 69.4 L2111.3 68.2 L2113.8 68.0 L2116.2 67.8 L2118.6 68.2 L2121.0 71.0 L2123.5 73.9 L2125.9 57.1 L2128.3 74.0 L2130.7 79.5 L2133.2 89.2 L2135.6 98.9 L2138.0 107.0 L2138.0 107 L2138.0 107.0 L2135.6 121.8 L2133.2 130.4 L2130.7 116.9 L2128.3 136.8 L2125.9 135.5 L2123.5 116.8 L2121.0 132.8 L2118.6 142.7 L2116.2 152.4 L2113.8 158.7 L2111.3 125.6 L2108.9 145.8 L2106.5 141.1 L2104.1 140.4 L2101.6 139.8 L2099.2 141.4 L2096.8 145.6 L2094.4 150.0 L2091.9 151.5 L2089.5 150.0 L2087.1 122.2 L2084.7 150.4 L2082.2 155.2 L2079.8 175.3 L2077.4 157.8 L2075.0 152.9 L2072.5 148.3 L2070.1 145.8 L2067.7 142.5 L2065.3 133.3 L2062.8 128.0 L2060.4 120.5 L2058.0 107.0 Z M2138.0 107 L2138.0 107.0 L2140.4 99.0 L2142.8 74.9 L2145.3 46.7 L2147.7 40.8 L2150.1 85.3 L2152.5 81.8 L2155.0 81.6 L2157.4 103.2 L2159.8 80.4 L2162.2 74.7 L2164.7 73.3 L2167.1 75.9 L2169.5 79.8 L2171.9 83.1 L2174.4 81.9 L2176.8 73.7 L2179.2 69.4 L2181.6 50.1 L2184.1 99.4 L2186.5 77.0 L2188.9 76.6 L2191.3 46.0 L2193.8 76.5 L2196.2 76.4 L2198.6 50.5 L2201.0 82.8 L2203.5 100.3 L2205.9 89.9 L2208.3 87.1 L2210.7 101.1 L2213.2 96.7 L2215.6 82.9 L2218.0 107.0 L2218.0 107 L2218.0 107.0 L2215.6 121.7 L2213.2 131.9 L2210.7 137.6 L2208.3 141.0 L2205.9 139.6 L2203.5 143.3 L2201.0 147.0 L2198.6 149.1 L2196.2 142.9 L2193.8 138.2 L2191.3 132.9 L2188.9 137.0 L2186.5 141.3 L2184.1 145.9 L2181.6 146.9 L2179.2 146.7 L2176.8 146.5 L2174.4 149.3 L2171.9 153.4 L2169.5 124.9 L2167.1 160.7 L2164.7 160.4 L2162.2 159.9 L2159.8 155.7 L2157.4 119.8 L2155.0 139.1 L2152.5 133.0 L2150.1 131.9 L2147.7 130.1 L2145.3 125.4 L2142.8 124.5 L2140.4 119.5 L2138.0 107.0 Z M2218.0 107 L2218.0 107.0 L2220.4 100.2 L2222.9 94.4 L2225.3 85.9 L2227.7 75.3 L2230.1 77.8 L2232.6 83.0 L2235.0 82.7 L2237.4 80.3 L2239.9 81.5 L2242.3 84.2 L2244.7 82.9 L2247.1 78.9 L2249.6 75.7 L2252.0 73.4 L2254.4 73.2 L2256.9 76.0 L2259.3 79.3 L2261.7 103.5 L2264.1 87.0 L2266.6 82.0 L2269.0 95.9 L2271.4 75.9 L2273.9 42.8 L2276.3 78.7 L2278.7 86.7 L2281.1 94.8 L2283.6 89.5 L2286.0 107.0 L2286.0 107 L2286.0 107.0 L2283.6 119.2 L2281.1 110.7 L2278.7 129.7 L2276.3 114.0 L2273.9 133.8 L2271.4 166.2 L2269.0 140.0 L2266.6 147.1 L2264.1 154.4 L2261.7 153.9 L2259.3 151.8 L2256.9 119.2 L2254.4 151.2 L2252.0 154.4 L2249.6 157.6 L2247.1 157.5 L2244.7 154.7 L2242.3 151.8 L2239.9 148.8 L2237.4 145.5 L2235.0 141.3 L2232.6 137.9 L2230.1 137.0 L2227.7 111.7 L2225.3 171.3 L2222.9 124.0 L2220.4 117.3 L2218.0 107.0 Z M2286.0 107 L2286.0 107.0 L2288.5 96.5 L2290.9 86.3 L2293.4 76.1 L2295.8 72.3 L2298.3 75.3 L2300.7 77.6 L2303.2 78.8 L2305.6 85.2 L2308.1 90.1 L2310.5 95.8 L2313.0 107.0 L2313.0 107 L2313.0 107.0 L2310.5 119.8 L2308.1 137.5 L2305.6 149.1 L2303.2 151.3 L2300.7 149.5 L2298.3 153.6 L2295.8 116.9 L2293.4 136.7 L2290.9 124.8 L2288.5 121.0 L2286.0 107.0 Z M2318.0 107 L2318.0 107.0 L2320.4 97.4 L2322.8 78.6 L2325.2 80.6 L2327.6 55.2 L2330.0 82.8 L2332.5 79.2 L2334.9 73.0 L2337.3 68.0 L2339.7 73.2 L2342.1 78.4 L2344.5 101.1 L2346.9 95.6 L2349.3 72.3 L2351.7 70.6 L2354.1 69.5 L2356.5 69.6 L2359.0 43.7 L2361.4 82.4 L2363.8 87.1 L2366.2 88.9 L2368.6 94.5 L2371.0 107.0 L2371.0 107 L2371.0 107.0 L2368.6 120.7 L2366.2 126.5 L2363.8 116.8 L2361.4 135.8 L2359.0 136.7 L2356.5 145.5 L2354.1 154.1 L2351.7 160.2 L2349.3 142.5 L2346.9 138.6 L2344.5 149.5 L2342.1 160.8 L2339.7 153.6 L2337.3 141.1 L2334.9 137.6 L2332.5 151.9 L2330.0 164.2 L2327.6 125.6 L2325.2 132.6 L2322.8 121.2 L2320.4 114.5 L2318.0 107.0 Z" fill="#dbefe2" stroke="#3e6a4c" stroke-width="1.6" stroke-linejoin="round"/>
<line x1="0" y1="65" x2="2398" y2="65" stroke="#1e3a28" stroke-width="1.2"/>
<line x1="0" y1="67.5" x2="2398" y2="67.5" stroke="#e6f2ea" stroke-width="2"/>
<line x1="0" y1="70" x2="2398" y2="70" stroke="#1e3a28" stroke-width="1.2"/>
</svg>
<div style="left:462px;top:1178px;width:30px;height:260px;background:linear-gradient(90deg,rgba(0,0,0,0.22),rgba(0,0,0,0))"></div>
<div style="left:462px;top:1176px;width:2398px;height:4px;background:#0e0e10"></div>
<div style="left:2830px;top:1178px;width:30px;height:260px;background:linear-gradient(90deg,rgba(0,0,0,0),rgba(0,0,0,0.2))"></div>
<div style="left:464px;top:1401px;width:248px;height:29px;border-radius:5px;background:#1d3f2a"></div>
<div style="left:469px;top:1404.3px;font-size:23px;line-height:23px;color:#f0f0f0;font-weight:400;white-space:nowrap;">HPL 00-01 dubbing.wav</div>
<svg style="position:absolute;left:693px;top:1442px;" width="107" height="256" viewBox="0 0 107 256">
<defs><clipPath id="c693"><rect x="0" y="0" width="107" height="256" rx="8"/></clipPath></defs>
<g clip-path="url(#c693)">
<rect x="0" y="0" width="107" height="256" fill="#45925f"/>
<g stroke="#3b7f53" stroke-width="1"><line x1="7.5" y1="0" x2="7.5" y2="256" /><line x1="19.5" y1="0" x2="19.5" y2="256" /><line x1="31.5" y1="0" x2="31.5" y2="256" /><line x1="43.5" y1="0" x2="43.5" y2="256" /><line x1="55.5" y1="0" x2="55.5" y2="256" /><line x1="67.5" y1="0" x2="67.5" y2="256" /><line x1="79.5" y1="0" x2="79.5" y2="256" /><line x1="91.5" y1="0" x2="91.5" y2="256" /><line x1="103.5" y1="0" x2="103.5" y2="256" /></g>
<line x1="0" y1="128.5" x2="107" y2="128.5" stroke="#33603f" stroke-width="1.6"/>
<line x1="0" y1="83.5" x2="107" y2="83.5" stroke="#3a7050" stroke-width="1.2"/>
<line x1="0" y1="211.5" x2="107" y2="211.5" stroke="#3a7050" stroke-width="1.2"/>
<line x1="0" y1="62.5" x2="107" y2="62.5" stroke="#1e3a28" stroke-width="1.2"/>
<line x1="0" y1="65" x2="107" y2="65" stroke="#e6f2ea" stroke-width="2"/>
<line x1="0" y1="67.5" x2="107" y2="67.5" stroke="#1e3a28" stroke-width="1.2"/>
<line x1="2" y1="41" x2="105" y2="41" stroke="#3e6a4c" stroke-width="1.4"/><path d="M7 41 L9 31 L11 41 L9 51 Z M32 41 L33 38 L34 41 L33 44 Z M48 41 L49.5 35 L51 41 L49.5 47 Z M56 41 L57 38 L58 41 L57 44 Z M86 41 L88 35 L90 41 L91 21 L93 41 L91 61 L89 45 Z" fill="#dbefe2" stroke="#3e6a4c" stroke-width="1"/><line x1="2" y1="171" x2="105" y2="171" stroke="#3e6a4c" stroke-width="1.4"/><path d="M7 171 L9 161 L11 171 L9 181 Z M32 171 L33 168 L34 171 L33 174 Z M48 171 L49.5 165 L51 171 L49.5 177 Z M56 171 L57 168 L58 171 L57 174 Z M86 171 L88 165 L90 171 L91 151 L93 171 L91 191 L89 175 Z" fill="#dbefe2" stroke="#3e6a4c" stroke-width="1"/>
</g>
<rect x="1" y="1" width="105" height="254" rx="8" fill="none" stroke="#141416" stroke-width="2"/>
</svg>
<svg style="position:absolute;left:1617px;top:1442px;" width="42" height="256" viewBox="0 0 42 256">
<defs><clipPath id="c1617"><rect x="0" y="0" width="42" height="256" rx="8"/></clipPath></defs>
<g clip-path="url(#c1617)">
<rect x="0" y="0" width="42" height="256" fill="#45925f"/>
<g stroke="#3b7f53" stroke-width="1"><line x1="7.5" y1="0" x2="7.5" y2="256" /><line x1="19.5" y1="0" x2="19.5" y2="256" /><line x1="31.5" y1="0" x2="31.5" y2="256" /></g>
<line x1="0" y1="128.5" x2="42" y2="128.5" stroke="#33603f" stroke-width="1.6"/>
<line x1="0" y1="83.5" x2="42" y2="83.5" stroke="#3a7050" stroke-width="1.2"/>
<line x1="0" y1="211.5" x2="42" y2="211.5" stroke="#3a7050" stroke-width="1.2"/>
<line x1="0" y1="87.5" x2="42" y2="87.5" stroke="#1e3a28" stroke-width="1.2"/>
<line x1="0" y1="90" x2="42" y2="90" stroke="#e6f2ea" stroke-width="2"/>
<line x1="0" y1="92.5" x2="42" y2="92.5" stroke="#1e3a28" stroke-width="1.2"/>
<line x1="2" y1="41" x2="40" y2="41" stroke="#3e6a4c" stroke-width="1.4"/><path d="M10 41 L11 39 L12 41 L11 43 Z M18 41 L19 39 L20 41 L19 43 Z" fill="#dbefe2" stroke="#3e6a4c" stroke-width="1"/><line x1="2" y1="171" x2="40" y2="171" stroke="#3e6a4c" stroke-width="1.4"/><path d="M10 171 L11 169 L12 171 L11 173 Z M18 171 L19 169 L20 171 L19 173 Z" fill="#dbefe2" stroke="#3e6a4c" stroke-width="1"/>
</g>
<rect x="1" y="1" width="40" height="254" rx="8" fill="none" stroke="#141416" stroke-width="2"/>
</svg>
<div style="left:699px;top:1662px;width:73px;height:31px;border-radius:5px;background:#1d3f2a"></div>
<div style="left:703px;top:1667.3px;font-size:22px;line-height:22px;color:#f0f0f0;font-weight:400;white-space:nowrap;">pa...av</div>
<div style="left:1955.5px;top:860px;width:7px;height:854px;background:#08080a"></div>
<svg style="position:absolute;left:1940px;top:834px;" width="38" height="32" viewBox="0 0 38 32"><path d="M4 2 L34 2 L34 14.5 L21.5 26 L16.5 26 L4 14.5 Z" fill="#e84b3c" stroke="#08080a" stroke-width="2" stroke-linejoin="round"/></svg>
<div style="left:1957px;top:850px;width:4px;height:864px;background:#e84b3c"></div>
<div style="left:0px;top:1736px;width:2880px;height:2px;background:#0b0b0c"></div>
<div style="left:0px;top:1738px;width:2880px;height:62px;background:#18191b"></div>
<div style="left:104.5px;top:1756.3px;font-size:26px;line-height:26px;color:#f0f0f0;font-weight:700;white-space:nowrap;letter-spacing:0.2px;">DaVinci Resolve Studio 20</div>
<div style="left:1801px;top:1738px;width:237px;height:62px;background:#000"></div>
<div style="left:1801px;top:1796px;width:237px;height:4px;background:#e8483c"></div>
<svg style="position:absolute;left:40px;top:1740px;" width="60" height="50" viewBox="0 0 60 50"><path d="M30.00 28.70 L35.35 23.00 A7.6 7.6 0 1 0 24.45 23.20 Z M29.10 30.20 L21.35 28.65 A7.9 7.9 0 1 0 27.55 37.95 Z M30.70 30.20 L32.25 37.95 A7.9 7.9 0 1 0 38.45 28.65 Z" fill="#f4f4f4"/></svg>
<svg style="position:absolute;left:680px;top:1740px;" width="1600" height="60" viewBox="0 0 1600 60">
<g fill="none" stroke="#8a8a8a" stroke-width="2">
 <line x1="32" y1="12.7" x2="56" y2="12.7" stroke="#5a5a5c"/>
 <path d="M27.5 19.5 L27.5 16.7 L57.5 16.7 L57.5 19.5" stroke="#7a7a7c"/>
 <rect x="24.8" y="20.4" width="34.4" height="22.6" rx="2"/>
</g>
<path d="M27 40 L30 39.8 L41.6 30 L47.4 34.7 L54.4 39.8 L57 40 L57 42 L27 42 Z" fill="#333335"/>
<path d="M30 39.8 L41.6 30 L47.4 34.7 L54.4 39.8" fill="none" stroke="#8a8a8a" stroke-width="1.8"/>
<circle cx="32.9" cy="28.9" r="2.6" fill="#8a8a8a"/>
<path d="M268 16 Q268.5 14.3 270.5 14.3 L301 14.3 Q304.5 14.3 304 17.5 L301.5 35 Q301 37.5 298.5 37.5 L268 37.5 Q265 37.5 265.5 34.5 Z" fill="#2a2a2c" stroke="#8a8a8a" stroke-width="2"/>
<g fill="#8a8a8a"><circle cx="272" cy="20" r="1.3"/><circle cx="278" cy="20" r="1.3"/><circle cx="292" cy="20" r="1.3"/><circle cx="297" cy="20" r="1.3"/><circle cx="271" cy="32" r="1.3"/><circle cx="276" cy="32" r="1.3"/><circle cx="290" cy="32" r="1.3"/><circle cx="295.5" cy="32" r="1.3"/></g>
<line x1="287.4" y1="9.3" x2="278.9" y2="42.1" stroke="#1a1a1d" stroke-width="4"/>
<line x1="287.4" y1="9.3" x2="278.9" y2="42.1" stroke="#8a8a8a" stroke-width="1.8"/>
<g stroke="#8a8a8a" stroke-width="1.8"><line x1="260" y1="18.5" x2="270" y2="18.5"/><line x1="258" y1="24.3" x2="268" y2="24.3"/><line x1="255.7" y1="30.5" x2="266" y2="30.5"/></g>
<line x1="522.6" y1="11" x2="522.6" y2="45" stroke="#8a8a8a" stroke-width="2"/>
<path d="M520.2 10 L525 10 L524 14 L521.2 14 Z" fill="#8a8a8a"/>
<g stroke="#7a7a7c" stroke-width="4.6" stroke-linecap="round">
 <line x1="503" y1="20.8" x2="517.6" y2="20.8"/><line x1="529" y1="20.8" x2="539.5" y2="20.8"/>
 <line x1="511" y1="28.9" x2="517.6" y2="28.9"/><line x1="528.5" y1="28.9" x2="537.2" y2="28.9"/>
 <line x1="503" y1="36.6" x2="517.6" y2="36.6"/><line x1="527.4" y1="36.6" x2="543" y2="36.6"/>
</g>
<path d="M735 40 Q738 30 748 22" fill="none" stroke="#2a2a2c" stroke-width="7" stroke-linecap="round"/>
<path d="M763.2 41.7 L776.3 18.2 A2.8 2.8 0 0 1 781.2 21 L768 44.5 A2.8 2.8 0 0 1 763.2 41.7 Z" fill="none" stroke="#8a8a8a" stroke-width="1.8"/>
<path d="M765 41.5 L771 31 L773.8 32.5 L767.8 43 Z" fill="#8a8a8a"/>
<g fill="#8a8a8a">
 <path d="M766.7 5.5 L767.6 9.4 L771.5 10.4 L767.6 11.4 L766.7 15.3 L765.8 11.4 L761.9 10.4 L765.8 9.4 Z"/>
 <path d="M748.2 12.2 L749.1 15.8 L752.7 16.7 L749.1 17.6 L748.2 21.2 L747.3 17.6 L743.7 16.7 L747.3 15.8 Z"/>
 <path d="M758.6 19.8 L759.5 23.4 L763.1 24.3 L759.5 25.2 L758.6 28.8 L757.7 25.2 L754.1 24.3 L757.7 23.4 Z"/>
</g>
<g>
 <circle cx="994.2" cy="15" r="3.4" fill="#8a8a8a"/><circle cx="1004.4" cy="13.2" r="3.4" fill="#555"/>
 <circle cx="1013.2" cy="19.7" r="3.4" fill="#555"/><circle cx="1014.6" cy="30" r="3.4" fill="#606060"/>
 <circle cx="1008" cy="38.9" r="3.4" fill="#6e6e6e"/><circle cx="997.4" cy="40.5" r="3.4" fill="#777"/>
 <circle cx="988.9" cy="34" r="3.4" fill="#7c7c7c"/><circle cx="987.3" cy="23.1" r="3.4" fill="#8a8a8a"/>
 <circle cx="1000.9" cy="26.6" r="3.4" fill="#8a8a8a"/>
</g>
<defs><linearGradient id="fg" x1="0" y1="0" x2="0" y2="1"><stop offset="0" stop-color="#92e070"/><stop offset="1" stop-color="#28c4c0"/></linearGradient></defs>
<path d="M1232.5 20.2 L1254.3 13.9 L1254.3 35.5 A5.2 4.5 0 1 1 1250.9 31.6 L1250.9 21.6 L1235.9 25.9 L1235.9 38.4 A5.2 4.5 0 1 1 1232.5 34.5 Z" fill="url(#fg)"/>
<g transform="translate(1481,26) rotate(45)" fill="none" stroke="#8a8a8a" stroke-width="1.8" stroke-linejoin="round">
 <path d="M0 -18 Q7.5 -10 6.5 3 L5 9 L-5 9 L-6.5 3 Q-7.5 -10 0 -18 Z" fill="#232325"/>
 <circle cx="0" cy="-4" r="3"/>
 <path d="M-6.3 -1 L-11.5 5 L-11 11.5 L-5.3 8"/>
 <path d="M6.3 -1 L11.5 5 L11 11.5 L5.3 8"/>
 <path d="M-3 11 L0 17 L3 11"/>
</g>
</svg>
<svg style="position:absolute;left:2690px;top:1750px;" width="45" height="40" viewBox="0 0 45 40"><path d="M8 21 L23 6 L38 21 L34.5 21 L34.5 32.5 L26 32.5 L26 25 L20 25 L20 32.5 L11.5 32.5 L11.5 21 Z" fill="#8a8a8a"/></svg>
<svg style="position:absolute;left:2790px;top:1748px;" width="44" height="44" viewBox="0 0 44 44"><g transform="translate(21,21)"><path d="M-2.8 -15.5 L2.8 -15.5 L3.6 -11 L7.6 -9.4 L11.3 -12.1 L15.2 -8.2 L12.5 -4.5 L14.1 -0.5 L18.6 0.3 L18.6 5.9 L14.1 6.7 L12.5 10.7 L15.2 14.4 L11.3 18.3 L7.6 15.6 L3.6 17.2 L2.8 21.7 L-2.8 21.7 L-3.6 17.2 L-7.6 15.6 L-11.3 18.3 L-15.2 14.4 L-12.5 10.7 L-14.1 6.7 L-18.6 5.9 L-18.6 0.3 L-14.1 -0.5 L-12.5 -4.5 L-15.2 -8.2 L-11.3 -12.1 L-7.6 -9.4 L-3.6 -11 Z" transform="translate(0,-3.1) scale(0.82)" fill="#8a8a8a"/><circle cx="0" cy="0" r="6" fill="#1a1a1d"/></g></svg>
</body></html>
